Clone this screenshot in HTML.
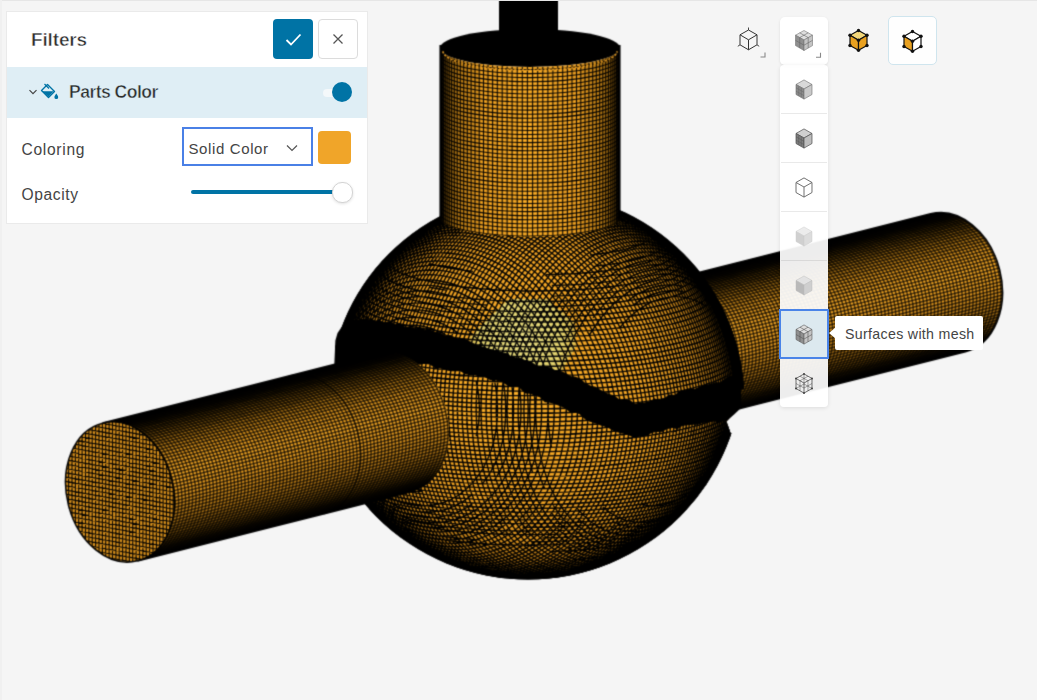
<!DOCTYPE html>
<html><head><meta charset="utf-8"><title>Filters</title>
<style>
html,body{margin:0;padding:0}
body{width:1037px;height:700px;overflow:hidden;position:relative;background:#f5f5f5;font-family:"Liberation Sans",sans-serif;color:#333}
.abs{position:absolute}
#topline{left:0;top:0;width:1037px;height:1px;background:#e6e6e6}
#leftline{left:0;top:0;width:2px;height:700px;background:#f0f0f0}
#panel{left:7px;top:12px;width:360px;height:211px;background:#fff;box-shadow:0 0 0 1px #eaeaea}
#ttl{left:24px;top:17px;font-size:19px;font-weight:bold;color:#2f2f2f;-webkit-text-stroke:.45px #fff;letter-spacing:-.15px;line-height:22px}
#ok{left:266px;top:7px;width:40px;height:40px;border-radius:4px;background:#0073a5}
#cancel{left:311px;top:7px;width:38px;height:38px;border-radius:4px;background:#fff;border:1px solid #dcdcdc}
#band{left:0;top:55px;width:360px;height:51px;background:#dfeef5}
#pc{left:62px;top:68.5px;font-size:17.6px;font-weight:bold;color:#2f2f2f;-webkit-text-stroke:.45px #dfeef5;line-height:22px;letter-spacing:-.55px}
#tog{left:316px;top:77px;width:22px;height:8px;border-radius:4px;background:#f4f8fa}
#knob{left:325px;top:70px;width:20px;height:20px;border-radius:10px;background:#0073a5}
.lbl{font-size:15.6px;color:#444;line-height:18px;letter-spacing:.7px}
#sel{left:175px;top:115px;width:127px;height:35px;border:2.5px solid #4a80e6;background:#fff;box-sizing:content-box}
#selt{left:4.5px;top:10.5px;font-size:15px;color:#444;line-height:18px;letter-spacing:.62px}
#sw{left:311px;top:119px;width:33px;height:33px;border-radius:4px;background:#f0a529}
#trk{left:184px;top:178px;width:150px;height:4px;border-radius:2px;background:#0073a5}
#thumb{left:325px;top:170px;width:19px;height:19px;border-radius:10px;background:#fff;border:1px solid #d4d4d4;box-shadow:0 1px 3px rgba(0,0,0,.12);box-sizing:content-box}
.tb{width:48px;height:48px;border-radius:5px}
#b2{left:780px;top:17px;background:rgba(255,255,255,.93);box-shadow:0 1px 3px rgba(0,0,0,.10)}
#b4{left:888px;top:16px;width:47px;height:47px;background:rgba(255,255,255,.9);border:1px solid #cfe5ee}
#dd{left:780px;top:65px;width:48px;height:342px;border-radius:4px;background:rgba(255,255,255,.93);box-shadow:0 1px 4px rgba(0,0,0,.10)}
.sep{left:1px;width:46px;height:1px;background:rgba(0,0,0,.085)}
#selit{left:-1px;top:244px;width:46px;height:46px;border:2px solid #4a84e8;background:#dce9ef}
#tip{left:835px;top:316px;width:148px;height:34px;background:#fff;border-radius:2px}
#tipa{left:829px;top:327px;width:0;height:0;border-top:6.5px solid transparent;border-bottom:6.5px solid transparent;border-right:7px solid #fff}
#tipt{left:10px;top:8.5px;font-size:14.2px;color:#444;line-height:18px;white-space:nowrap;letter-spacing:.32px}
</style></head><body>
<svg width="1037" height="700" viewBox="0 0 1037 700" style="position:absolute;left:0;top:0"><defs><filter id="soft" filterUnits="userSpaceOnUse" x="0" y="0" width="1037" height="700" color-interpolation-filters="sRGB"><feConvolveMatrix order="3" kernelMatrix="0.0324 0.1152 0.0324 0.1152 0.4096 0.1152 0.0324 0.1152 0.0324" edgeMode="none" preserveAlpha="false"/></filter>
<clipPath id="cU"><circle cx="536.3" cy="400.6" r="208"/></clipPath>
<clipPath id="cL"><circle cx="528.1" cy="365" r="214.5"/></clipPath>
<clipPath id="cA"><path d="M0,0L1037,0L1037,389L740.5,389L690,407.5L635,420L615,414.2L565,390.5L520,374.2L470,357.8L420,346L370,339L336,348L0,348Z"/></clipPath>
<clipPath id="cB"><path d="M336,348L370,339L420,346L470,357.8L520,374.2L565,390.5L615,414.2L635,420L690,407.5L740.5,389L741,406L726.5,421.5L730.5,433L1037,433L1037,700L336,700Z"/></clipPath>
<radialGradient id="gU" gradientUnits="userSpaceOnUse" cx="536.3" cy="400.6" r="208" fx="496.3" fy="335.6">
<stop offset="0" stop-color="#f8ac28"/><stop offset=".6" stop-color="#f0a222"/><stop offset=".8" stop-color="#d8901c"/><stop offset=".9" stop-color="#ac7012"/><stop offset=".96" stop-color="#5a3a06"/><stop offset="1" stop-color="#000"/></radialGradient>
<radialGradient id="gL" gradientUnits="userSpaceOnUse" cx="528.1" cy="365" r="214.5" fx="518.1" fy="395">
<stop offset="0" stop-color="#f8ac28"/><stop offset=".6" stop-color="#f0a222"/><stop offset=".8" stop-color="#d8901c"/><stop offset=".9" stop-color="#ac7012"/><stop offset=".96" stop-color="#5a3a06"/><stop offset="1" stop-color="#000"/></radialGradient>
<radialGradient id="gY" gradientUnits="userSpaceOnUse" cx="522" cy="338" r="62">
<stop offset="0" stop-color="#e8de84"/><stop offset=".65" stop-color="#e0d06c"/><stop offset=".88" stop-color="#e0c050" stop-opacity=".8"/><stop offset="1" stop-color="#e8b040" stop-opacity=".15"/></radialGradient>
<linearGradient id="gP" gradientUnits="userSpaceOnUse" x1="282.6" y1="377.7" x2="317.4" y2="515.3"><stop offset="0" stop-color="#000000"/><stop offset="0.06" stop-color="#1c1202"/><stop offset="0.13" stop-color="#5e3e07"/><stop offset="0.22" stop-color="#a87012"/><stop offset="0.34" stop-color="#e2981e"/><stop offset="0.46" stop-color="#f3a624"/><stop offset="0.62" stop-color="#e0961e"/><stop offset="0.78" stop-color="#b07414"/><stop offset="0.9" stop-color="#6a4508"/><stop offset="0.96" stop-color="#2a1a02"/><stop offset="1" stop-color="#000000"/></linearGradient>
<linearGradient id="gC" gradientUnits="userSpaceOnUse" x1="440" y1="0" x2="620" y2="0"><stop offset="0" stop-color="#1a1001"/><stop offset="0.03" stop-color="#6a4508"/><stop offset="0.1" stop-color="#b87a14"/><stop offset="0.25" stop-color="#e89c20"/><stop offset="0.5" stop-color="#f5a824"/><stop offset="0.75" stop-color="#e89c20"/><stop offset="0.9" stop-color="#b87a14"/><stop offset="0.97" stop-color="#6a4508"/><stop offset="1" stop-color="#1a1001"/></linearGradient>
<clipPath id="cRP"><path d="M602.6,296.8L930.6,213.9A53.2 71 -14.2 0 1 999.6,269.7A53.2 71 -14.2 0 1 965.4,351.6L637.4,434.5Z"/></clipPath>
<clipPath id="cC"><path d="M440,48L440,217.4A90 19 0 0 0 530,236.4A90 19 0 0 0 620,217.4L620,48A90 19 0 0 1 530,67A90 19 0 0 1 440,48Z"/></clipPath>
<clipPath id="cLP"><path d="M102.6,423.2L377.2,353.8A53.2 71 -14.2 0 1 446.2,409.6A53.2 71 -14.2 0 1 412,491.4L137.4,560.8Z"/></clipPath>
<clipPath id="cCap"><ellipse rx="53.2" ry="71" transform="translate(120 492) rotate(-14.2)"/></clipPath>
<linearGradient id="gCap" gradientUnits="userSpaceOnUse" x1="102.6" y1="423.2" x2="137.4" y2="560.8"><stop offset="0" stop-color="#d8901c"/><stop offset="0.5" stop-color="#eda022"/><stop offset="1" stop-color="#d08a1a"/></linearGradient></defs><g filter="url(#soft)"><path d="M602.6,296.8L930.6,213.9A53.2 71 -14.2 0 1 999.6,269.7A53.2 71 -14.2 0 1 965.4,351.6L637.4,434.5Z" fill="url(#gP)"/>
<g clip-path="url(#cRP)" fill="none" stroke="#000" stroke-opacity=".68">
<path d="M602.6,296.8L930.6,213.9M605.1,296.2L933.1,213.3M607.7,295.9L935.7,213M610.2,295.6L938.2,212.7M612.8,295.6L940.8,212.7M615.5,295.7L943.5,212.8M618.1,295.9L946.1,213M620.7,296.4L948.7,213.5M623.4,297L951.4,214.1M626,297.7L954,214.8M628.6,298.6L956.6,215.7M631.2,299.7L959.2,216.8M633.7,300.9L961.7,218M636.3,302.3L964.3,219.4M638.8,303.8L966.8,220.9M641.2,305.5L969.2,222.6M643.6,307.3L971.6,224.4M645.9,309.2L973.9,226.3M648.2,311.3L976.2,228.4M650.4,313.5L978.4,230.6M652.6,315.8L980.6,232.9M654.7,318.2L982.7,235.3M656.7,320.8L984.7,237.9M658.6,323.4L986.6,240.5M660.4,326.2L988.4,243.3M662.1,329L990.1,246.1M663.7,332L991.7,249.1M665.2,335L993.2,252.1M666.6,338L994.6,255.1M667.9,341.2L995.9,258.3M669.1,344.4L997.1,261.5M670.2,347.6L998.2,264.7M671.2,350.9L999.2,268M672,354.3L1000,271.4M672.7,357.6L1000.7,274.7M673.3,361L1001.3,278.1M673.8,364.4L1001.8,281.5M674.2,367.7L1002.2,284.8M674.4,371.1L1002.4,288.2M674.5,374.5L1002.5,291.6M674.4,377.8L1002.4,294.9M674.3,381.2L1002.3,298.3M674,384.4L1002,301.5M673.6,387.7L1001.6,304.8M673,390.9L1001,308M672.4,394L1000.4,311.1M671.6,397.1L999.6,314.2M670.7,400L998.7,317.1M669.6,403L997.6,320.1M668.5,405.8L996.5,322.9M667.2,408.5L995.2,325.6M665.9,411.1L993.9,328.2M664.4,413.7L992.4,330.8M662.8,416.1L990.8,333.2M661.2,418.3L989.2,335.5M659.4,420.5L987.4,337.6M657.5,422.6L985.5,339.7M655.6,424.5L983.6,341.6M653.5,426.2L981.5,343.3M651.4,427.9L979.4,345M649.2,429.3L977.2,346.4M647,430.7L975,347.8M644.7,431.9L972.7,349M642.3,432.9L970.3,350M639.9,433.8L967.9,350.9M637.4,434.5L965.4,351.6" stroke-width="1.5"/>
<path d="M603.6,296.5A53.2 71 -14.2 0 1 672.6,352.3A53.2 71 -14.2 0 1 638.4,434.2M607.1,295.7A53.2 71 -14.2 0 1 676.1,351.5A53.2 71 -14.2 0 1 641.9,433.3M610.6,294.8A53.2 71 -14.2 0 1 679.6,350.6A53.2 71 -14.2 0 1 645.4,432.5M614.1,293.9A53.2 71 -14.2 0 1 683.1,349.7A53.2 71 -14.2 0 1 648.9,431.6M617.6,293A53.2 71 -14.2 0 1 686.6,348.8A53.2 71 -14.2 0 1 652.4,430.7M621.1,292.1A53.2 71 -14.2 0 1 690.1,347.9A53.2 71 -14.2 0 1 655.9,429.8M624.6,291.2A53.2 71 -14.2 0 1 693.6,347A53.2 71 -14.2 0 1 659.4,428.9M628.1,290.4A53.2 71 -14.2 0 1 697.1,346.1A53.2 71 -14.2 0 1 662.9,428M631.6,289.5A53.2 71 -14.2 0 1 700.6,345.3A53.2 71 -14.2 0 1 666.4,427.1M635.1,288.6A53.2 71 -14.2 0 1 704.1,344.4A53.2 71 -14.2 0 1 669.9,426.3M638.6,287.7A53.2 71 -14.2 0 1 707.6,343.5A53.2 71 -14.2 0 1 673.4,425.4M642.1,286.8A53.2 71 -14.2 0 1 711.1,342.6A53.2 71 -14.2 0 1 676.9,424.5M645.6,285.9A53.2 71 -14.2 0 1 714.6,341.7A53.2 71 -14.2 0 1 680.4,423.6M649.1,285A53.2 71 -14.2 0 1 718.1,340.8A53.2 71 -14.2 0 1 683.9,422.7M652.6,284.2A53.2 71 -14.2 0 1 721.6,340A53.2 71 -14.2 0 1 687.4,421.8M656.1,283.3A53.2 71 -14.2 0 1 725.1,339.1A53.2 71 -14.2 0 1 690.9,421M659.6,282.4A53.2 71 -14.2 0 1 728.6,338.2A53.2 71 -14.2 0 1 694.4,420.1M663.1,281.5A53.2 71 -14.2 0 1 732.1,337.3A53.2 71 -14.2 0 1 697.9,419.2M666.6,280.6A53.2 71 -14.2 0 1 735.6,336.4A53.2 71 -14.2 0 1 701.4,418.3M670.1,279.7A53.2 71 -14.2 0 1 739.1,335.5A53.2 71 -14.2 0 1 704.9,417.4M673.6,278.9A53.2 71 -14.2 0 1 742.6,334.6A53.2 71 -14.2 0 1 708.4,416.5M677.1,278A53.2 71 -14.2 0 1 746.1,333.8A53.2 71 -14.2 0 1 711.9,415.6M680.6,277.1A53.2 71 -14.2 0 1 749.6,332.9A53.2 71 -14.2 0 1 715.4,414.8M684.1,276.2A53.2 71 -14.2 0 1 753.1,332A53.2 71 -14.2 0 1 718.9,413.9M687.6,275.3A53.2 71 -14.2 0 1 756.6,331.1A53.2 71 -14.2 0 1 722.4,413M691.1,274.4A53.2 71 -14.2 0 1 760.1,330.2A53.2 71 -14.2 0 1 725.9,412.1M694.6,273.5A53.2 71 -14.2 0 1 763.6,329.3A53.2 71 -14.2 0 1 729.4,411.2M698.1,272.7A53.2 71 -14.2 0 1 767.1,328.5A53.2 71 -14.2 0 1 732.9,410.3M701.6,271.8A53.2 71 -14.2 0 1 770.6,327.6A53.2 71 -14.2 0 1 736.4,409.5M705.1,270.9A53.2 71 -14.2 0 1 774.1,326.7A53.2 71 -14.2 0 1 739.9,408.6M708.6,270A53.2 71 -14.2 0 1 777.6,325.8A53.2 71 -14.2 0 1 743.4,407.7M712.1,269.1A53.2 71 -14.2 0 1 781.1,324.9A53.2 71 -14.2 0 1 746.9,406.8M715.6,268.2A53.2 71 -14.2 0 1 784.6,324A53.2 71 -14.2 0 1 750.4,405.9M719.1,267.4A53.2 71 -14.2 0 1 788.1,323.1A53.2 71 -14.2 0 1 753.9,405M722.6,266.5A53.2 71 -14.2 0 1 791.6,322.3A53.2 71 -14.2 0 1 757.4,404.1M726.1,265.6A53.2 71 -14.2 0 1 795.1,321.4A53.2 71 -14.2 0 1 760.9,403.3M729.6,264.7A53.2 71 -14.2 0 1 798.6,320.5A53.2 71 -14.2 0 1 764.4,402.4M733.1,263.8A53.2 71 -14.2 0 1 802.1,319.6A53.2 71 -14.2 0 1 767.9,401.5M736.6,262.9A53.2 71 -14.2 0 1 805.6,318.7A53.2 71 -14.2 0 1 771.4,400.6M740.1,262A53.2 71 -14.2 0 1 809.1,317.8A53.2 71 -14.2 0 1 774.9,399.7M743.6,261.2A53.2 71 -14.2 0 1 812.6,317A53.2 71 -14.2 0 1 778.4,398.8M747.1,260.3A53.2 71 -14.2 0 1 816.1,316.1A53.2 71 -14.2 0 1 781.9,398M750.6,259.4A53.2 71 -14.2 0 1 819.6,315.2A53.2 71 -14.2 0 1 785.4,397.1M754.1,258.5A53.2 71 -14.2 0 1 823.1,314.3A53.2 71 -14.2 0 1 788.9,396.2M757.6,257.6A53.2 71 -14.2 0 1 826.6,313.4A53.2 71 -14.2 0 1 792.4,395.3M761.1,256.7A53.2 71 -14.2 0 1 830.1,312.5A53.2 71 -14.2 0 1 795.9,394.4M764.6,255.9A53.2 71 -14.2 0 1 833.6,311.6A53.2 71 -14.2 0 1 799.4,393.5M768.1,255A53.2 71 -14.2 0 1 837.1,310.8A53.2 71 -14.2 0 1 802.9,392.6M771.6,254.1A53.2 71 -14.2 0 1 840.6,309.9A53.2 71 -14.2 0 1 806.4,391.8M775.1,253.2A53.2 71 -14.2 0 1 844.1,309A53.2 71 -14.2 0 1 809.9,390.9M778.6,252.3A53.2 71 -14.2 0 1 847.6,308.1A53.2 71 -14.2 0 1 813.4,390M782.1,251.4A53.2 71 -14.2 0 1 851.1,307.2A53.2 71 -14.2 0 1 816.9,389.1M785.6,250.5A53.2 71 -14.2 0 1 854.6,306.3A53.2 71 -14.2 0 1 820.4,388.2M789.1,249.7A53.2 71 -14.2 0 1 858.1,305.5A53.2 71 -14.2 0 1 823.9,387.3M792.6,248.8A53.2 71 -14.2 0 1 861.6,304.6A53.2 71 -14.2 0 1 827.4,386.5M796.1,247.9A53.2 71 -14.2 0 1 865.1,303.7A53.2 71 -14.2 0 1 830.9,385.6M799.6,247A53.2 71 -14.2 0 1 868.6,302.8A53.2 71 -14.2 0 1 834.4,384.7M803.1,246.1A53.2 71 -14.2 0 1 872.1,301.9A53.2 71 -14.2 0 1 837.9,383.8M806.6,245.2A53.2 71 -14.2 0 1 875.6,301A53.2 71 -14.2 0 1 841.4,382.9M810.1,244.4A53.2 71 -14.2 0 1 879.1,300.1A53.2 71 -14.2 0 1 844.9,382M813.6,243.5A53.2 71 -14.2 0 1 882.6,299.3A53.2 71 -14.2 0 1 848.4,381.1M817.1,242.6A53.2 71 -14.2 0 1 886.1,298.4A53.2 71 -14.2 0 1 851.9,380.3M820.6,241.7A53.2 71 -14.2 0 1 889.6,297.5A53.2 71 -14.2 0 1 855.4,379.4M824.1,240.8A53.2 71 -14.2 0 1 893.1,296.6A53.2 71 -14.2 0 1 858.9,378.5M827.6,239.9A53.2 71 -14.2 0 1 896.6,295.7A53.2 71 -14.2 0 1 862.4,377.6M831.1,239A53.2 71 -14.2 0 1 900.1,294.8A53.2 71 -14.2 0 1 865.9,376.7M834.6,238.2A53.2 71 -14.2 0 1 903.6,294A53.2 71 -14.2 0 1 869.4,375.8M838.1,237.3A53.2 71 -14.2 0 1 907.1,293.1A53.2 71 -14.2 0 1 872.9,375M841.6,236.4A53.2 71 -14.2 0 1 910.6,292.2A53.2 71 -14.2 0 1 876.4,374.1M845.1,235.5A53.2 71 -14.2 0 1 914.1,291.3A53.2 71 -14.2 0 1 879.9,373.2M848.6,234.6A53.2 71 -14.2 0 1 917.6,290.4A53.2 71 -14.2 0 1 883.4,372.3M852.1,233.7A53.2 71 -14.2 0 1 921.1,289.5A53.2 71 -14.2 0 1 886.9,371.4M855.6,232.9A53.2 71 -14.2 0 1 924.6,288.6A53.2 71 -14.2 0 1 890.4,370.5M859.1,232A53.2 71 -14.2 0 1 928.1,287.8A53.2 71 -14.2 0 1 893.9,369.6M862.6,231.1A53.2 71 -14.2 0 1 931.6,286.9A53.2 71 -14.2 0 1 897.4,368.8M866.1,230.2A53.2 71 -14.2 0 1 935.1,286A53.2 71 -14.2 0 1 900.9,367.9M869.6,229.3A53.2 71 -14.2 0 1 938.6,285.1A53.2 71 -14.2 0 1 904.4,367M873.1,228.4A53.2 71 -14.2 0 1 942.1,284.2A53.2 71 -14.2 0 1 907.9,366.1M876.6,227.6A53.2 71 -14.2 0 1 945.6,283.3A53.2 71 -14.2 0 1 911.4,365.2M880.1,226.7A53.2 71 -14.2 0 1 949.1,282.5A53.2 71 -14.2 0 1 914.9,364.3M883.6,225.8A53.2 71 -14.2 0 1 952.6,281.6A53.2 71 -14.2 0 1 918.4,363.5M887.1,224.9A53.2 71 -14.2 0 1 956.1,280.7A53.2 71 -14.2 0 1 921.9,362.6M890.6,224A53.2 71 -14.2 0 1 959.6,279.8A53.2 71 -14.2 0 1 925.4,361.7M894.1,223.1A53.2 71 -14.2 0 1 963.1,278.9A53.2 71 -14.2 0 1 928.9,360.8M897.6,222.2A53.2 71 -14.2 0 1 966.6,278A53.2 71 -14.2 0 1 932.4,359.9M901.1,221.4A53.2 71 -14.2 0 1 970.1,277.1A53.2 71 -14.2 0 1 935.9,359M904.6,220.5A53.2 71 -14.2 0 1 973.6,276.3A53.2 71 -14.2 0 1 939.4,358.1M908.1,219.6A53.2 71 -14.2 0 1 977.1,275.4A53.2 71 -14.2 0 1 942.9,357.3M911.6,218.7A53.2 71 -14.2 0 1 980.6,274.5A53.2 71 -14.2 0 1 946.4,356.4M915.1,217.8A53.2 71 -14.2 0 1 984.1,273.6A53.2 71 -14.2 0 1 949.9,355.5M918.6,216.9A53.2 71 -14.2 0 1 987.6,272.7A53.2 71 -14.2 0 1 953.4,354.6M922.1,216.1A53.2 71 -14.2 0 1 991.1,271.8A53.2 71 -14.2 0 1 956.9,353.7M925.6,215.2A53.2 71 -14.2 0 1 994.6,271A53.2 71 -14.2 0 1 960.4,352.8M929.1,214.3A53.2 71 -14.2 0 1 998.1,270.1A53.2 71 -14.2 0 1 963.9,352" stroke-width="1.5"/>
</g>
<path d="M602.6,296.8L930.6,213.9A53.2 71 -14.2 0 1 999.6,269.7A53.2 71 -14.2 0 1 965.4,351.6L637.4,434.5Z" fill="none" stroke="#000" stroke-width="1.6"/>
<g clip-path="url(#cA)"><g clip-path="url(#cU)">
<circle cx="536.3" cy="400.6" r="208" fill="url(#gU)"/>
<path d="M510,302L546,302L572,324L573,346L558,372L470,372L473,338Z" fill="url(#gY)" stroke="url(#gY)" stroke-width="6" stroke-linejoin="round"/>
<path d="M371.3,347.6A73.4 97.9 -14.2 0 1 465.9,364.3M476.2,379A73.4 97.9 -14.2 0 1 476.2,502.1M465.9,513.1A73.4 97.9 -14.2 0 1 371.3,496.4M361,481.7A73.4 97.9 -14.2 0 1 361,358.6M382.1,332.1A79.4 105.9 -14.2 0 1 460.9,346M491.1,388.6A79.4 105.9 -14.2 0 1 491.1,495.3M460.9,527.1A79.4 105.9 -14.2 0 1 382.1,513.2M351.8,470.6A79.4 105.9 -14.2 0 1 351.8,364M389,321.6A84.9 113.2 -14.2 0 1 459.7,334.1M501.7,392.3A84.9 113.2 -14.2 0 1 501.7,492.8M459.7,536.2A84.9 113.2 -14.2 0 1 389,523.7M347,465.4A84.9 113.2 -14.2 0 1 347,365M335.3,411.9A89.9 119.8 -14.2 0 1 427.3,311A89.9 119.8 -14.2 0 1 519.2,444.4A89.9 119.8 -14.2 0 1 427.3,545.3A89.9 119.8 -14.2 0 1 335.3,411.9M333.5,410.4A94.5 126 -14.2 0 1 430.1,304.3A94.5 126 -14.2 0 1 526.8,444.5A94.5 126 -14.2 0 1 430.1,550.6A94.5 126 -14.2 0 1 333.5,410.4M364.1,320.4A98.7 131.7 -14.2 0 1 501.9,344.7M505.7,350.1A98.7 131.7 -14.2 0 1 505.7,529M501.9,533A98.7 131.7 -14.2 0 1 364.1,508.7M360.4,503.3A98.7 131.7 -14.2 0 1 360.4,324.4M330.8,407.4A102.7 137 -14.2 0 1 435.9,292.1A102.7 137 -14.2 0 1 541,444.5A102.7 137 -14.2 0 1 435.9,559.9A102.7 137 -14.2 0 1 330.8,407.4M329.9,406A106.5 142 -14.2 0 1 438.8,286.5A106.5 142 -14.2 0 1 547.7,444.5A106.5 142 -14.2 0 1 438.8,564A106.5 142 -14.2 0 1 329.9,406M329.2,404.6A110 146.7 -14.2 0 1 441.7,281.2A110 146.7 -14.2 0 1 554.2,444.4A110 146.7 -14.2 0 1 441.7,567.9A110 146.7 -14.2 0 1 329.2,404.6M328.7,403.3A113.3 151 -14.2 0 1 444.6,276.1A113.3 151 -14.2 0 1 560.5,444.3A113.3 151 -14.2 0 1 444.6,571.4A113.3 151 -14.2 0 1 328.7,403.3M328.4,402A116.4 155.2 -14.2 0 1 447.5,271.4A116.4 155.2 -14.2 0 1 566.5,444.1A116.4 155.2 -14.2 0 1 447.5,574.7A116.4 155.2 -14.2 0 1 328.4,402M328.3,403.5A119.3 159.1 -14.2 0 1 429.7,265.4A119.3 159.1 -14.2 0 1 566.1,393.4A119.3 159.1 -14.2 0 1 506.2,570.4A119.3 159.1 -14.2 0 1 351.6,496.3M329.3,380.3A122.1 162.8 -14.2 0 1 440.2,261.1A122.1 162.8 -14.2 0 1 571.3,390.7A122.1 162.8 -14.2 0 1 519.4,568.2A122.1 162.8 -14.2 0 1 364.9,518.5M331.8,362.4A124.7 166.2 -14.2 0 1 503.2,278.2A124.7 166.2 -14.2 0 1 566.2,522.4A124.7 166.2 -14.2 0 1 375.9,533M335.3,347.1A127.1 169.5 -14.2 0 1 511.2,277.6A127.1 169.5 -14.2 0 1 572.4,521.4A127.1 169.5 -14.2 0 1 384.4,542.7M339.1,334.5A129.5 172.6 -14.2 0 1 517.2,275.8A129.5 172.6 -14.2 0 1 579.6,517.7A129.5 172.6 -14.2 0 1 395.7,553.8M343.7,322A131.7 175.6 -14.2 0 1 524.5,275.4A131.7 175.6 -14.2 0 1 585.2,517A131.7 175.6 -14.2 0 1 403.6,560.8M348,312.3A133.7 178.4 -14.2 0 1 530.5,274.2A133.7 178.4 -14.2 0 1 591,515.3A133.7 178.4 -14.2 0 1 412,567.4M352.8,302.7A135.7 181 -14.2 0 1 536.4,273.2A135.7 181 -14.2 0 1 596.7,513.3A135.7 181 -14.2 0 1 420.8,573.6M358.1,293.3A137.6 183.5 -14.2 0 1 542.4,272.3A137.6 183.5 -14.2 0 1 602.3,511.2A137.6 183.5 -14.2 0 1 429.9,579.3M362.5,286.4A139.3 185.8 -14.2 0 1 547.6,271.1A139.3 185.8 -14.2 0 1 607.5,509.9A139.3 185.8 -14.2 0 1 437,583.4M367.1,279.6A141 188 -14.2 0 1 552,269.3A141 188 -14.2 0 1 613.2,506.6A141 188 -14.2 0 1 446.8,588.3M373.7,270.8A142.5 190.1 -14.2 0 1 558.6,269.7A142.5 190.1 -14.2 0 1 617.9,505.9A142.5 190.1 -14.2 0 1 454.3,591.7M379,264.5A144 192 -14.2 0 1 563.8,268.9A144 192 -14.2 0 1 622.8,504.2A144 192 -14.2 0 1 461.9,594.9M384.6,258.3A145.3 193.8 -14.2 0 1 568.9,268.3A145.3 193.8 -14.2 0 1 627.6,502.3A145.3 193.8 -14.2 0 1 469.8,597.7M390.4,252.4A146.6 195.5 -14.2 0 1 573.9,267.8A146.6 195.5 -14.2 0 1 632.3,500.4A146.6 195.5 -14.2 0 1 477.7,600.2M394.5,248.5A147.8 197.1 -14.2 0 1 577.5,265.9A147.8 197.1 -14.2 0 1 637.2,497.3A147.8 197.1 -14.2 0 1 485.7,602.4M400.7,242.9A148.9 198.5 -14.2 0 1 583.2,266.3A148.9 198.5 -14.2 0 1 641.1,497.2A148.9 198.5 -14.2 0 1 491.2,603.7M407.1,237.6A149.9 199.9 -14.2 0 1 588.1,266.2A149.9 199.9 -14.2 0 1 645.5,495A149.9 199.9 -14.2 0 1 499.4,605.3M411.6,234.1A150.8 201.1 -14.2 0 1 591.5,264.6A150.8 201.1 -14.2 0 1 650.1,491.7A150.8 201.1 -14.2 0 1 507.7,606.6M418.4,229.2A151.7 202.3 -14.2 0 1 597.1,265.4A151.7 202.3 -14.2 0 1 653.8,491.4A151.7 202.3 -14.2 0 1 513.3,607.3M425.4,224.6A152.4 203.3 -14.2 0 1 601.9,265.6A152.4 203.3 -14.2 0 1 658,489A152.4 203.3 -14.2 0 1 521.7,608.1M430.3,221.7A153.1 204.2 -14.2 0 1 606,265.1A153.1 204.2 -14.2 0 1 661.8,487.6A153.1 204.2 -14.2 0 1 527.3,608.4M437.6,217.5A153.7 205 -14.2 0 1 610.7,265.5A153.7 205 -14.2 0 1 665.8,485A153.7 205 -14.2 0 1 535.7,608.6M442.6,214.9A154.3 205.8 -14.2 0 1 666.4,368.2A154.3 205.8 -14.2 0 1 541.4,608.5M450.2,211.3A154.7 206.4 -14.2 0 1 669.8,367.3A154.7 206.4 -14.2 0 1 549.8,608.2M455.4,209A155.1 206.9 -14.2 0 1 673,366.5A155.1 206.9 -14.2 0 1 555.5,607.7M463.3,205.9A155.4 207.3 -14.2 0 1 676.2,365.7A155.4 207.3 -14.2 0 1 563.9,606.8M468.6,203.9A155.7 207.6 -14.2 0 1 679.3,364.9A155.7 207.6 -14.2 0 1 569.5,605.9M474,202.1A155.9 207.8 -14.2 0 1 681.9,362.4A155.9 207.8 -14.2 0 1 577.8,604.4M482.1,199.8A155.9 208 -14.2 0 1 685.4,363.4A155.9 208 -14.2 0 1 583.4,603.2M487.6,198.4A156 208 -14.2 0 1 688.3,362.7A156 208 -14.2 0 1 588.9,601.8M495.9,196.6A155.9 207.9 -14.2 0 1 691.1,362A155.9 207.9 -14.2 0 1 597,599.5M501.5,195.5A155.8 207.8 -14.2 0 1 693.9,361.3A155.8 207.8 -14.2 0 1 602.4,597.8M507.1,194.7A155.6 207.5 -14.2 0 1 696.1,358.8A155.6 207.5 -14.2 0 1 610.3,595M515.4,193.7A155.3 207.1 -14.2 0 1 699.2,359.9A155.3 207.1 -14.2 0 1 615.6,592.9M521.1,193.2A155 206.7 -14.2 0 1 701.3,357.5A155 206.7 -14.2 0 1 623.4,589.5M529.5,192.7A154.5 206.1 -14.2 0 1 704.2,358.6A154.5 206.1 -14.2 0 1 628.5,587M535.2,192.6A154.1 205.4 -14.2 0 1 706.6,358A154.1 205.4 -14.2 0 1 633.6,584.5M543.6,192.7A153.5 204.7 -14.2 0 1 708.9,357.4A153.5 204.7 -14.2 0 1 640.9,580.4M549.3,193A152.8 203.8 -14.2 0 1 711.2,356.9A152.8 203.8 -14.2 0 1 645.8,577.5M557.7,193.7A152.1 202.8 -14.2 0 1 713.4,356.3A152.1 202.8 -14.2 0 1 652.8,572.9M563.3,194.4A151.3 201.8 -14.2 0 1 715.1,354.1A151.3 201.8 -14.2 0 1 659.7,568M571.6,195.6A150.4 200.6 -14.2 0 1 717.5,355.3A150.4 200.6 -14.2 0 1 664.2,564.6M579.8,197.2A149.4 199.3 -14.2 0 1 719.5,354.8A149.4 199.3 -14.2 0 1 670.7,559.3M585.3,198.5A148.4 197.9 -14.2 0 1 720.9,352.6A148.4 197.9 -14.2 0 1 677,553.8M593.4,200.6A147.3 196.4 -14.2 0 1 723.1,353.8A147.3 196.4 -14.2 0 1 681.1,550M601.3,203A146 194.8 -14.2 0 1 724.8,353.4A146 194.8 -14.2 0 1 686.9,544M609.2,205.8A144.7 193 -14.2 0 1 726.4,353A144.7 193 -14.2 0 1 692.5,537.9M616.9,208.8A143.3 191.2 -14.2 0 1 728,352.6A143.3 191.2 -14.2 0 1 697.9,531.6M624.4,212.2A141.8 189.2 -14.2 0 1 729.4,352.2A141.8 189.2 -14.2 0 1 703,525.1M631.8,215.8A140.2 187 -14.2 0 1 730.3,350.3A140.2 187 -14.2 0 1 709.3,516.1M641.4,221.1A138.6 184.8 -14.2 0 1 732,351.6A138.6 184.8 -14.2 0 1 713.7,509.2M648.3,225.3A136.8 182.4 -14.2 0 1 732.7,349.7A136.8 182.4 -14.2 0 1 719.1,499.8M657.2,231.4A134.9 179.8 -14.2 0 1 722.8,492.7M665.8,237.8A132.8 177.2 -14.2 0 1 727.3,482.9M673.9,244.6A130.7 174.3 -14.2 0 1 732.2,470.5M683.6,253.7A128.4 171.3 -14.2 0 1 735.5,460.5M694.3,265.3A126 168.1 -14.2 0 1 739.4,445.3M704,277.5A123.5 164.7 -14.2 0 1 742.2,430M715.4,294.8A120.8 161.2 -14.2 0 1 744.1,409.3M728.1,320.1A118 157.4 -14.2 0 1 743.4,381M705.8,517.5A79.8 127.3 -170 0 1 619.2,539.3M619.2,328.3A79.8 127.3 -170 0 1 705.8,306.4M685.4,539.2A83.3 132.9 -170 0 1 632.7,552.5M632.7,305.4A83.3 132.9 -170 0 1 685.4,292.1M683,543.2A86.6 138.1 -170 0 1 628.2,557M628.2,300.2A86.6 138.1 -170 0 1 683,286.3M713.5,509.5A89.7 143 -170 0 1 589.6,539.1M589.6,334.6A89.7 143 -170 0 1 714.7,303M704.4,523.1A92.6 147.7 -170 0 1 593,551.3M593,317.8A92.6 147.7 -170 0 1 704.4,289.6M698.3,531A95.3 152 -170 0 1 561.4,516.8A95.3 152 -170 0 1 599,300.8A95.3 152 -170 0 1 732.9,332.6M690.3,540.4A97.8 156.1 -170 0 1 565.1,536.7M552.6,511A97.8 156.1 -170 0 1 552.6,372.5M565.1,340.6A97.8 156.1 -170 0 1 718.5,301.8M683.3,547.8A100.3 159.9 -170 0 1 564.5,545.9M540.2,489.1A100.3 159.9 -170 0 1 540.2,397.7M564.5,328.7A100.3 159.9 -170 0 1 712.1,291.4M675.9,554.8A102.5 163.6 -170 0 1 541.7,515A102.5 163.6 -170 0 1 579.8,295.9A102.5 163.6 -170 0 1 719.8,302.6M668.1,561.5A104.7 167 -170 0 1 535.1,513.3A104.7 167 -170 0 1 574.7,293.3A104.7 167 -170 0 1 715.8,295.6M661.7,566.5A106.7 170.2 -170 0 1 540.8,539M538.5,534.9A106.7 170.2 -170 0 1 538.5,344M540.8,338.7A106.7 170.2 -170 0 1 625.1,251.2A106.7 170.2 -170 0 1 711.6,288.7M655.2,571.3A108.7 173.3 -170 0 1 523.5,512.4A108.7 173.3 -170 0 1 563.4,290.1A108.7 173.3 -170 0 1 707.1,282M648.4,575.8A110.5 176.2 -170 0 1 517.8,511.7A110.5 176.2 -170 0 1 557.9,288.8A110.5 176.2 -170 0 1 702.4,275.4M641.5,580A112.2 179 -170 0 1 512.2,510.9A112.2 179 -170 0 1 552.3,287.6A112.2 179 -170 0 1 697.4,269M634.4,584A113.8 181.6 -170 0 1 506.7,509.9A113.8 181.6 -170 0 1 546.8,286.6A113.8 181.6 -170 0 1 692.1,262.8M629.2,586.7A115.4 184 -170 0 1 501.8,510.6A115.4 184 -170 0 1 540.8,286.5A115.4 184 -170 0 1 686.6,256.8M621.8,590.2A116.8 186.3 -170 0 1 496.2,508.4A116.8 186.3 -170 0 1 536.5,284.3A116.8 186.3 -170 0 1 682.5,252.6M616.4,592.5A118.2 188.5 -170 0 1 491.5,508.9A118.2 188.5 -170 0 1 530.5,284.6A118.2 188.5 -170 0 1 676.6,247M608.9,595.5A119.4 190.5 -170 0 1 486,506.5A119.4 190.5 -170 0 1 526.3,282.6A119.4 190.5 -170 0 1 672.2,243.1M603.4,597.5A120.6 192.4 -170 0 1 481.2,505.9A120.6 192.4 -170 0 1 521.5,281.5A120.6 192.4 -170 0 1 667.7,239.4M597.8,599.3A121.8 194.2 -170 0 1 476.6,506.2A121.8 194.2 -170 0 1 515.6,282.2A121.8 194.2 -170 0 1 661.3,234.4M590,601.5A122.8 195.9 -170 0 1 471.4,503.4A122.8 195.9 -170 0 1 511.5,280.5A122.8 195.9 -170 0 1 656.6,230.9M584.3,603A123.8 197.4 -170 0 1 466.8,502.6A123.8 197.4 -170 0 1 506.9,279.7A123.8 197.4 -170 0 1 651.8,227.6M578.6,604.2A124.7 198.9 -170 0 1 462.3,501.6A124.7 198.9 -170 0 1 502.2,279A124.7 198.9 -170 0 1 646.9,224.4M572.9,605.3A125.5 200.2 -170 0 1 458,501.6A125.5 200.2 -170 0 1 496.5,280.1A125.5 200.2 -170 0 1 639.9,220.3M567.2,606.3A126.3 201.4 -170 0 1 453.6,500.6A126.3 201.4 -170 0 1 492,279.6A126.3 201.4 -170 0 1 634.8,217.4M561.4,607.1A127 202.5 -170 0 1 449.2,499.4A127 202.5 -170 0 1 487.5,279.2A127 202.5 -170 0 1 629.7,214.7M555.6,607.7A127.6 203.5 -170 0 1 443.5,385.1A127.6 203.5 -170 0 1 624.5,212.2M547.6,608.3A128.2 204.4 -170 0 1 439.8,382.6A128.2 204.4 -170 0 1 619.2,209.8M541.8,608.5A128.7 205.2 -170 0 1 435.9,381.9A128.7 205.2 -170 0 1 613.8,207.6M536,608.6A129.1 205.9 -170 0 1 432,381.2A129.1 205.9 -170 0 1 608.4,205.5M530.2,608.5A129.5 206.5 -170 0 1 428.2,380.5A129.5 206.5 -170 0 1 602.9,203.6M524.4,608.2A129.8 207 -170 0 1 424.4,379.9A129.8 207 -170 0 1 597.4,201.8M518.7,607.8A130 207.4 -170 0 1 420.7,379.2A130 207.4 -170 0 1 591.9,200.2M512.9,607.3A130.2 207.7 -170 0 1 417.1,378.6A130.2 207.7 -170 0 1 586.3,198.7M507.2,606.5A130.3 207.9 -170 0 1 413.5,377.9A130.3 207.9 -170 0 1 580.7,197.4M501.4,605.6A130.4 208 -170 0 1 410,377.3A130.4 208 -170 0 1 575,196.2M495.8,604.6A130.4 208 -170 0 1 406.5,376.7A130.4 208 -170 0 1 569.3,195.2M490.1,603.4A130.3 207.9 -170 0 1 403.1,376.1A130.3 207.9 -170 0 1 563.6,194.4M484.5,602A130.2 207.7 -170 0 1 399.8,375.5A130.2 207.7 -170 0 1 557.8,193.7M478.9,600.5A130 207.4 -170 0 1 396.5,374.9A130 207.4 -170 0 1 552.1,193.2M473.4,598.8A129.8 207 -170 0 1 393.3,374.4A129.8 207 -170 0 1 546.3,192.8M467.9,597A129.5 206.6 -170 0 1 390.1,373.8A129.5 206.6 -170 0 1 540.5,192.6M462.4,595A129.1 206 -170 0 1 387.1,373.3A129.1 206 -170 0 1 534.7,192.6M457,592.9A128.7 205.3 -170 0 1 384,372.7A128.7 205.3 -170 0 1 528.9,192.7M451.7,590.6A128.2 204.5 -170 0 1 381.1,372.2A128.2 204.5 -170 0 1 523.1,193M446.4,588.2A127.7 203.6 -170 0 1 378.1,371.7A127.7 203.6 -170 0 1 517.3,193.5M441.2,585.6A127 202.6 -170 0 1 375,373A127 202.6 -170 0 1 509.3,194.4M436.1,582.9A126.3 201.5 -170 0 1 372.2,372.5A126.3 201.5 -170 0 1 503.6,195.2M431,580A125.6 200.3 -170 0 1 369.5,372A125.6 200.3 -170 0 1 497.8,196.2M426.1,577A124.8 199 -170 0 1 366.9,371.5A124.8 199 -170 0 1 492.1,197.4M419.3,572.5A123.9 197.6 -170 0 1 364.6,369.3A123.9 197.6 -170 0 1 486.4,198.7M414.5,569.2A122.9 196 -170 0 1 362.1,368.9A122.9 196 -170 0 1 480.8,200.1M409.8,565.7A121.9 194.4 -170 0 1 359.4,370.2A121.9 194.4 -170 0 1 473,202.5M405.2,562.1A120.8 192.6 -170 0 1 357,369.7A120.8 192.6 -170 0 1 467.5,204.3M399,556.8A119.6 190.7 -170 0 1 355,367.7A119.6 190.7 -170 0 1 462,206.3M394.7,552.9A118.3 188.7 -170 0 1 352.5,368.9A118.3 188.7 -170 0 1 454.4,209.4M388.8,547.2A117 186.5 -170 0 1 350.7,366.9A117 186.5 -170 0 1 449.1,211.8M384.7,543A115.5 184.3 -170 0 1 348.4,368.2A115.5 184.3 -170 0 1 441.7,215.3M379.3,537A114 181.8 -170 0 1 346.7,366.3A114 181.8 -170 0 1 436.6,218.1M374.1,530.7A112.4 179.3 -170 0 1 344.8,365.9A112.4 179.3 -170 0 1 429.5,222.1M370.5,526.1A110.7 176.5 -170 0 1 342.8,367.2A110.7 176.5 -170 0 1 422.6,226.4M365.7,519.6A108.9 173.6 -170 0 1 341.1,366.8A108.9 173.6 -170 0 1 415.9,231M361.2,512.8A107 170.6 -170 0 1 339.6,366.6A107 170.6 -170 0 1 409.4,235.8M355.8,504A104.9 167.4 -170 0 1 338.4,364.9A104.9 167.4 -170 0 1 403.1,240.9M342.8,475.1A102.8 164 -170 0 1 342.8,339.6M359.9,295.8A102.8 164 -170 0 1 395.3,247.7M347.4,487.7A100.5 160.3 -170 0 1 389.6,253.2M335.2,451A98.1 156.5 -170 0 1 335.2,361.6M359,294A98.1 156.5 -170 0 1 381,262.2M367.5,279.2A95.6 152.5 -170 0 1 374.5,269.9M334.4,450.7A92.9 148.1 -170 0 1 334.4,356.4M354.8,299.6A92.9 148.1 -170 0 1 367.1,279.6M329.8,425.3A87 138.7 -170 0 1 337.4,340.4M605.7,590.3A23.8 112.4 -90 0 0 635.7,582.8M570.4,585.2A27.7 131.1 -90 0 0 662.4,566M592,580.4A28.8 136.4 -90 0 0 668.1,561.5M401.9,558.9A29.9 141.4 -90 0 0 516.9,579.3M529.1,579.5A29.9 141.4 -90 0 0 673.6,556.8M431.3,566.8A30.9 146.2 -90 0 0 454.8,570.9M549.3,576A30.9 146.2 -90 0 0 678.8,552.2M562.7,572.2A31.8 150.6 -90 0 0 683.6,547.4M385,543.3A32.7 154.7 -90 0 0 536.6,569.2A32.7 154.7 -90 0 0 687.7,543.2M388.3,544.1A33.5 158.7 -90 0 0 506.3,565M533.8,565.6A33.5 158.7 -90 0 0 692.1,538.4M390.5,542.8A34.3 162.4 -90 0 0 491.8,560.7M539.4,562A34.3 162.4 -90 0 0 695.7,534.2M373,529.4A35.1 165.9 -90 0 0 536.6,558.3A35.1 165.9 -90 0 0 699.7,529.3M369.2,524.5A35.8 169.2 -90 0 0 536.6,554.6A35.8 169.2 -90 0 0 703.4,524.4M366.2,520.2A36.4 172.3 -90 0 0 536.6,550.9A36.4 172.3 -90 0 0 706.5,520.1M362.8,515.3A37 175.3 -90 0 0 535.1,547.1A37 175.3 -90 0 0 709.5,515.8M360,511A37.6 178.1 -90 0 0 536.6,543.3A37.6 178.1 -90 0 0 712.7,510.8M357,506A38.2 180.7 -90 0 0 535,539.5A38.2 180.7 -90 0 0 715.3,506.5M354.5,501.7A38.7 183.2 -90 0 0 536.6,535.6A38.7 183.2 -90 0 0 718.2,501.5M352.2,497.3A39.2 185.5 -90 0 0 536.6,531.7A39.2 185.5 -90 0 0 720.5,497.2M349.6,492.3A39.7 187.8 -90 0 0 535,527.8A39.7 187.8 -90 0 0 722.7,492.8M347.5,487.9A40.1 189.8 -90 0 0 536.6,523.8A40.1 189.8 -90 0 0 725.1,487.8M345.6,483.6A40.5 191.8 -90 0 0 536.6,519.8A40.5 191.8 -90 0 0 727.1,483.4M343.4,478.5A40.9 193.6 -90 0 0 536.6,515.8A40.9 193.6 -90 0 0 729.2,478.4M341.7,474.2A41.3 195.3 -90 0 0 536.6,511.8A41.3 195.3 -90 0 0 730.9,474M340.2,469.8A41.6 196.9 -90 0 0 536.6,507.7A41.6 196.9 -90 0 0 732.5,469.6M338.4,464.7A41.9 198.4 -90 0 0 534.9,503.6A41.9 198.4 -90 0 0 734,465.3M337.1,460.3A42.2 199.7 -90 0 0 536.6,499.5A42.2 199.7 -90 0 0 735.6,460.2M335.8,455.9A42.5 201 -90 0 0 536.7,495.4A42.5 201 -90 0 0 736.8,455.8M334.4,450.8A42.7 202.1 -90 0 0 534.9,491.2A42.7 202.1 -90 0 0 738,451.4M333.4,446.4A42.9 203.2 -90 0 0 536.7,487A42.9 203.2 -90 0 0 739.2,446.3M332.5,442A43.1 204.1 -90 0 0 536.7,482.8A43.1 204.1 -90 0 0 740.2,441.9M331.7,437.6A43.3 204.9 -90 0 0 536.7,478.6A43.3 204.9 -90 0 0 741,437.5M330.8,432.5A43.5 205.7 -90 0 0 536.7,474.4A43.5 205.7 -90 0 0 741.9,432.3M330.1,428.1A43.6 206.3 -90 0 0 536.7,470.1A43.6 206.3 -90 0 0 742.5,427.9M329.6,423.7A43.7 206.8 -90 0 0 536.7,465.8A43.7 206.8 -90 0 0 743,423.6M329.1,418.5A43.8 207.3 -90 0 0 534.9,461.5A43.8 207.3 -90 0 0 743.4,419.2M328.7,414.1A43.9 207.6 -90 0 0 536.7,457.2A43.9 207.6 -90 0 0 743.9,414M328.5,409.8A43.9 207.8 -90 0 0 536.7,452.8A43.9 207.8 -90 0 0 744.1,409.6M328.4,405.4A43.9 208 -90 0 0 536.7,448.5A43.9 208 -90 0 0 744.2,405.2M328.3,400.2A44 208 -90 0 0 534.8,444.1A44 208 -90 0 0 744.3,400.8M328.4,395.8A43.9 207.9 -90 0 0 536.7,439.7A43.9 207.9 -90 0 0 744.2,395.6M328.5,391.4A43.9 207.8 -90 0 0 536.7,435.2A43.9 207.8 -90 0 0 744.1,391.2M328.8,387A43.9 207.5 -90 0 0 536.7,430.8A43.9 207.5 -90 0 0 743.8,386.8M329.1,381.8A43.8 207.2 -90 0 0 536.7,426.3A43.8 207.2 -90 0 0 743.4,381.7M329.6,377.4A43.7 206.7 -90 0 0 536.7,421.8A43.7 206.7 -90 0 0 743,377.3M330.2,373A43.6 206.2 -90 0 0 536.7,417.3A43.6 206.2 -90 0 0 742.4,372.9M330.9,367.9A43.4 205.5 -90 0 0 534.9,412.8A43.4 205.5 -90 0 0 741.8,368.5M331.6,363.5A43.3 204.8 -90 0 0 536.7,408.2A43.3 204.8 -90 0 0 740.9,363.3M332.5,359.1A43.1 203.9 -90 0 0 536.7,403.6A43.1 203.9 -90 0 0 740.1,358.9M333.4,354.7A42.9 203 -90 0 0 536.7,399A42.9 203 -90 0 0 739.1,354.6M334.7,349.6A42.7 201.9 -90 0 0 534.9,394.4A42.7 201.9 -90 0 0 738.1,350.2M335.8,345.2A42.4 200.7 -90 0 0 536.7,389.8A42.4 200.7 -90 0 0 736.7,345M337.1,340.8A42.2 199.5 -90 0 0 536.6,385.1A42.2 199.5 -90 0 0 735.5,340.7M338.7,335.7A41.9 198.1 -90 0 0 534.9,380.4A41.9 198.1 -90 0 0 734.1,336.3M340.2,331.3A41.5 196.6 -90 0 0 536.6,375.7A41.5 196.6 -90 0 0 732.4,331.2M341.8,326.9A41.2 195 -90 0 0 536.6,370.9A41.2 195 -90 0 0 730.8,326.8M343.8,321.9A40.8 193.2 -90 0 0 535,366.2A40.8 193.2 -90 0 0 729,322.4M345.6,317.5A40.4 191.4 -90 0 0 536.6,361.4A40.4 191.4 -90 0 0 726.9,317.3M347.6,313.1A40 189.4 -90 0 0 536.6,356.6A40 189.4 -90 0 0 724.9,313M350,308.1A39.6 187.3 -90 0 0 535,351.7A39.6 187.3 -90 0 0 722.8,308.6M352.2,303.7A39.1 185 -90 0 0 536.6,346.8A39.1 185 -90 0 0 720.3,303.6M354.6,299.4A38.6 182.7 -90 0 0 536.6,341.9A38.6 182.7 -90 0 0 717.9,299.2M357.5,294.4A38.1 180.1 -90 0 0 536.6,337A38.1 180.1 -90 0 0 715.1,294.2M360.1,290A37.5 177.5 -90 0 0 536.6,332.1A37.5 177.5 -90 0 0 712.4,289.9M363.3,285.1A36.9 174.6 -90 0 0 535.1,327.1A36.9 174.6 -90 0 0 709.6,285.6M366.3,280.8A36.3 171.6 -90 0 0 536.6,322A36.3 171.6 -90 0 0 706.2,280.6M369.9,275.8A35.6 168.5 -90 0 0 535.1,317A35.6 168.5 -90 0 0 703.1,276.3M373.2,271.6A34.9 165.1 -90 0 0 536.6,311.8A34.9 165.1 -90 0 0 699.3,271.4M377.1,266.7A34.1 161.6 -90 0 0 376.8,278M393.8,288.6A34.1 161.6 -90 0 0 486.6,305M539.4,306.7A34.1 161.6 -90 0 0 695.8,267.2M380.8,262.4A33.3 157.8 -90 0 0 536.6,301.5A33.3 157.8 -90 0 0 691.7,262.3M385.2,257.6A32.5 153.8 -90 0 0 382.9,266.1M429.6,287.2A32.5 153.8 -90 0 0 446.1,290.1M552.6,296.1A32.5 153.8 -90 0 0 689.7,261.4M389.9,252.8A31.6 149.6 -90 0 0 452.1,285.5A31.6 149.6 -90 0 0 618.7,285.7A31.6 149.6 -90 0 0 683.1,253.3M394.3,248.6A30.7 145.1 -90 0 0 391.5,257.2M551.7,285.5A30.7 145.1 -90 0 0 681.1,252.8M399.5,243.9A29.7 140.4 -90 0 0 398.5,245M586.8,278.2A29.7 140.4 -90 0 0 674.1,256.2M405,239.3A28.6 135.3 -90 0 0 401.8,249.2M429.8,263.8A28.6 135.3 -90 0 0 473,271.4M546,274.7A28.6 135.3 -90 0 0 670.8,243.1M593.4,266.4A27.4 129.8 -90 0 0 661.2,249.3M589.9,255.1A24.9 117.7 -90 0 0 648.9,240.2" fill="none" stroke="#000" stroke-width="1.4"/>
<circle cx="536.3" cy="400.6" r="206.2" fill="none" stroke="#000" stroke-width="5.5"/>
<path d="M692.2,269.8A203.5 203.5 0 0 1 729.3,336A203.5 203.5 0 0 1 739.5,411.3" fill="none" stroke="#000" stroke-width="11" stroke-linecap="round" opacity=".92"/>
<path d="M333.3,372.1A205 205 0 0 1 350.5,314A205 205 0 0 1 384,263.4" fill="none" stroke="#000" stroke-width="7" stroke-linecap="round" opacity=".85"/>
</g></g>
<g clip-path="url(#cB)"><g clip-path="url(#cL)">
<circle cx="528.1" cy="365" r="214.5" fill="url(#gL)"/>
<path d="M388.6,301.1A72.5 96.6 -14.2 0 1 421.9,307M476.2,381A72.5 96.6 -14.2 0 1 476.2,436.2M421.9,491A72.5 96.6 -14.2 0 1 388.6,485.1M334.4,411.1A72.5 96.6 -14.2 0 1 334.4,355.9M324.6,379.3A84.5 112.7 -14.2 0 1 411,284.4A84.5 112.7 -14.2 0 1 497.5,409.9A84.5 112.7 -14.2 0 1 411,504.8A84.5 112.7 -14.2 0 1 324.6,379.3M356.1,292.7A89.8 119.7 -14.2 0 1 471.7,313.2M483.2,329.4A89.8 119.7 -14.2 0 1 483.2,482.9M471.7,495A89.8 119.7 -14.2 0 1 356.1,474.6M344.6,458.4A89.8 119.7 -14.2 0 1 344.6,304.9M361.3,282.3A94.6 126.1 -14.2 0 1 472.3,302M494.1,332.6A94.6 126.1 -14.2 0 1 494.1,481M472.3,503.9A94.6 126.1 -14.2 0 1 361.3,484.3M339.5,453.7A94.6 126.1 -14.2 0 1 339.5,305.3M318.4,374.5A99.1 132.1 -14.2 0 1 419.7,263.3A99.1 132.1 -14.2 0 1 521,410.3A99.1 132.1 -14.2 0 1 419.7,521.5A99.1 132.1 -14.2 0 1 318.4,374.5M317,373A103.2 137.7 -14.2 0 1 422.6,257.1A103.2 137.7 -14.2 0 1 528.2,410.3A103.2 137.7 -14.2 0 1 422.6,526.2A103.2 137.7 -14.2 0 1 317,373M315.9,371.6A107.1 142.9 -14.2 0 1 425.5,251.3A107.1 142.9 -14.2 0 1 535.1,410.3A107.1 142.9 -14.2 0 1 425.5,530.6A107.1 142.9 -14.2 0 1 315.9,371.6M315,370.2A110.8 147.7 -14.2 0 1 428.4,245.8A110.8 147.7 -14.2 0 1 541.7,410.2A110.8 147.7 -14.2 0 1 428.4,534.6A110.8 147.7 -14.2 0 1 315,370.2M314.4,368.8A114.2 152.3 -14.2 0 1 431.2,240.6A114.2 152.3 -14.2 0 1 548.1,410.1A114.2 152.3 -14.2 0 1 431.2,538.4A114.2 152.3 -14.2 0 1 314.4,368.8M313.9,367.5A117.5 156.7 -14.2 0 1 434.1,235.6A117.5 156.7 -14.2 0 1 554.3,410A117.5 156.7 -14.2 0 1 434.1,541.9A117.5 156.7 -14.2 0 1 313.9,367.5M313.7,366.2A120.5 160.8 -14.2 0 1 437,230.9A120.5 160.8 -14.2 0 1 560.3,409.8A120.5 160.8 -14.2 0 1 437,545.2A120.5 160.8 -14.2 0 1 313.7,366.2M313.6,362.2A123.4 164.6 -14.2 0 1 420.7,224.9A123.4 164.6 -14.2 0 1 559.7,357.4A123.4 164.6 -14.2 0 1 499.7,539.6A123.4 164.6 -14.2 0 1 340.4,468.8M314.9,341.1A126.2 168.3 -14.2 0 1 430.4,220.6A126.2 168.3 -14.2 0 1 564.9,354.6A126.2 168.3 -14.2 0 1 512.2,537.5A126.2 168.3 -14.2 0 1 353.1,489M317.8,322.6A128.8 171.7 -14.2 0 1 495.7,239.4A128.8 171.7 -14.2 0 1 559,491.5A128.8 171.7 -14.2 0 1 362.8,501.6M320.9,309.7A131.2 175 -14.2 0 1 501.7,237.4A131.2 175 -14.2 0 1 566.4,488A131.2 175 -14.2 0 1 373.5,513.7M324.7,296.8A133.6 178.1 -14.2 0 1 508.5,236.2A133.6 178.1 -14.2 0 1 572.8,485.8A133.6 178.1 -14.2 0 1 383.1,523.1M329.5,284A135.8 181.1 -14.2 0 1 516,235.9A135.8 181.1 -14.2 0 1 578.5,485A135.8 181.1 -14.2 0 1 391.3,530.2M333.9,274A137.9 183.8 -14.2 0 1 522,234.7A137.9 183.8 -14.2 0 1 584.3,483.2A137.9 183.8 -14.2 0 1 399.9,536.9M338.8,264.2A139.8 186.5 -14.2 0 1 528,233.7A139.8 186.5 -14.2 0 1 590.1,481.2A139.8 186.5 -14.2 0 1 408.8,543.3M342.8,256.9A141.7 189 -14.2 0 1 532.5,231.7A141.7 189 -14.2 0 1 596.1,478.1A141.7 189 -14.2 0 1 418.2,549.2M348.7,247.5A143.5 191.3 -14.2 0 1 539.3,231.8A143.5 191.3 -14.2 0 1 601,477.7A143.5 191.3 -14.2 0 1 425.4,553.3M353.4,240.6A145.1 193.5 -14.2 0 1 544.5,230.7A145.1 193.5 -14.2 0 1 606.1,476.1A145.1 193.5 -14.2 0 1 432.8,557.2M358.4,233.8A146.7 195.6 -14.2 0 1 549.7,229.7A146.7 195.6 -14.2 0 1 611.1,474.5A146.7 195.6 -14.2 0 1 440.5,560.8M363.7,227.2A148.2 197.6 -14.2 0 1 554.1,228.2A148.2 197.6 -14.2 0 1 616.7,470.8A148.2 197.6 -14.2 0 1 450.8,565.1M369.2,220.9A149.5 199.4 -14.2 0 1 560,228.3A149.5 199.4 -14.2 0 1 620.9,470.9A149.5 199.4 -14.2 0 1 456.1,567.1M375.1,214.7A150.8 201.1 -14.2 0 1 565.1,227.8A150.8 201.1 -14.2 0 1 625.6,468.9A150.8 201.1 -14.2 0 1 464.2,569.8M381.1,208.8A152 202.8 -14.2 0 1 570.2,227.4A152 202.8 -14.2 0 1 630.3,466.9A152 202.8 -14.2 0 1 472.3,572.1M387.5,203A153.2 204.3 -14.2 0 1 575.2,227.2A153.2 204.3 -14.2 0 1 634.8,464.7A153.2 204.3 -14.2 0 1 480.6,574.2M391.8,199.3A154.2 205.6 -14.2 0 1 579.5,226.2A154.2 205.6 -14.2 0 1 639,463.5A154.2 205.6 -14.2 0 1 486.2,575.4M398.5,194A155.2 206.9 -14.2 0 1 584.4,226.2A155.2 206.9 -14.2 0 1 643.4,461.2A155.2 206.9 -14.2 0 1 494.6,576.9M403.2,190.6A156 208.1 -14.2 0 1 587.8,224.6A156 208.1 -14.2 0 1 647.9,457.7A156 208.1 -14.2 0 1 503.1,578M410.2,185.8A156.8 209.2 -14.2 0 1 593.5,225.6A156.8 209.2 -14.2 0 1 651.6,457.4A156.8 209.2 -14.2 0 1 508.8,578.6M415.1,182.7A157.6 210.1 -14.2 0 1 596.8,224.2A157.6 210.1 -14.2 0 1 656,453.8A157.6 210.1 -14.2 0 1 517.4,579.2M422.5,178.3A158.2 211 -14.2 0 1 602.3,225.5A158.2 211 -14.2 0 1 659.5,453.4A158.2 211 -14.2 0 1 523.1,579.4M427.5,175.5A158.8 211.8 -14.2 0 1 659.9,330.3A158.8 211.8 -14.2 0 1 531.7,579.5M435.2,171.7A159.3 212.5 -14.2 0 1 663.7,331.2A159.3 212.5 -14.2 0 1 537.5,579.3M440.4,169.2A159.7 213 -14.2 0 1 667.1,330.4A159.7 213 -14.2 0 1 543.2,579M448.3,165.9A160.1 213.5 -14.2 0 1 670.3,329.6A160.1 213.5 -14.2 0 1 551.8,578.2M453.7,163.8A160.4 213.9 -14.2 0 1 673.5,328.8A160.4 213.9 -14.2 0 1 557.5,577.5M459.2,161.9A160.6 214.2 -14.2 0 1 676.1,326.2A160.6 214.2 -14.2 0 1 566,576.1M467.4,159.3A160.8 214.4 -14.2 0 1 679.6,327.2A160.8 214.4 -14.2 0 1 571.7,575M472.9,157.7A160.8 214.5 -14.2 0 1 682.5,326.5A160.8 214.5 -14.2 0 1 577.3,573.8M478.5,156.3A160.8 214.5 -14.2 0 1 685,323.9A160.8 214.5 -14.2 0 1 585.7,571.6M486.9,154.5A160.8 214.4 -14.2 0 1 688.3,325A160.8 214.4 -14.2 0 1 591.2,570M492.6,153.5A160.6 214.2 -14.2 0 1 691,324.3A160.6 214.2 -14.2 0 1 596.7,568.2M501.1,152.2A160.4 213.9 -14.2 0 1 693.7,323.6A160.4 213.9 -14.2 0 1 604.8,565.3M506.9,151.6A160.1 213.6 -14.2 0 1 696.3,323A160.1 213.6 -14.2 0 1 610.2,563.2M512.6,151.1A159.8 213.1 -14.2 0 1 698.4,320.5A159.8 213.1 -14.2 0 1 618,559.7M521.2,150.6A159.4 212.5 -14.2 0 1 701.3,321.7A159.4 212.5 -14.2 0 1 623.2,557.2M527,150.5A158.9 211.9 -14.2 0 1 703.7,321.1A158.9 211.9 -14.2 0 1 628.4,554.6M535.5,150.6A158.3 211.1 -14.2 0 1 706.1,320.5A158.3 211.1 -14.2 0 1 635.9,550.4M541.3,150.9A157.7 210.2 -14.2 0 1 708.3,319.9A157.7 210.2 -14.2 0 1 640.8,547.5M549.8,151.6A156.9 209.3 -14.2 0 1 710.5,319.4A156.9 209.3 -14.2 0 1 648,542.8M555.6,152.3A156.1 208.2 -14.2 0 1 712.6,318.8A156.1 208.2 -14.2 0 1 652.8,539.6M564,153.5A155.3 207.1 -14.2 0 1 714.7,318.3A155.3 207.1 -14.2 0 1 659.6,534.4M569.7,154.6A154.3 205.8 -14.2 0 1 716.2,316.1A154.3 205.8 -14.2 0 1 666.3,529.1M578,156.4A153.3 204.4 -14.2 0 1 718.5,317.3A153.3 204.4 -14.2 0 1 670.6,525.3M586.2,158.5A152.2 202.9 -14.2 0 1 720.3,316.9A152.2 202.9 -14.2 0 1 676.9,519.5M591.7,160.1A151 201.3 -14.2 0 1 721.6,314.7A151 201.3 -14.2 0 1 682.9,513.5M599.8,162.8A149.7 199.6 -14.2 0 1 723.3,314.3A149.7 199.6 -14.2 0 1 688.6,507.3M607.7,165.8A148.3 197.8 -14.2 0 1 724.8,314A148.3 197.8 -14.2 0 1 694.1,500.8M615.5,169.1A146.8 195.8 -14.2 0 1 726.3,313.6A146.8 195.8 -14.2 0 1 699.3,494.2M623.1,172.7A145.3 193.8 -14.2 0 1 727.7,313.3A145.3 193.8 -14.2 0 1 704.3,487.4M633,177.9A143.6 191.6 -14.2 0 1 729.4,314.6A143.6 191.6 -14.2 0 1 708.9,480.4M640.2,182.1A141.9 189.2 -14.2 0 1 730.6,314.3A141.9 189.2 -14.2 0 1 713.2,473.3M649.4,188.1A140 186.8 -14.2 0 1 718.6,463.6M656.1,192.9A138.1 184.1 -14.2 0 1 723.4,453.7M666.9,201.4A136 181.4 -14.2 0 1 727.7,443.6M674.9,208.6A133.8 178.5 -14.2 0 1 731.4,433.5M684.5,218.2A131.5 175.4 -14.2 0 1 735.3,420.6M693.3,228.2A129.1 172.1 -14.2 0 1 738.9,404.8M704.6,243.1A126.5 168.7 -14.2 0 1 741.2,389.1M715.8,261.1A123.8 165 -14.2 0 1 742.6,368M731.8,297.9A120.9 161.2 -14.2 0 1 739.4,327.9M690.2,491.9A73.8 117.7 -170 0 1 641.1,504.3M641.1,286.7A73.8 117.7 -170 0 1 690.2,274.3M707.8,480.4A85.3 136.1 -170 0 1 602.8,507M602.8,294.5A85.3 136.1 -170 0 1 707.8,268M691.6,501A88.6 141.4 -170 0 1 612.1,521.1M612.1,272.7A88.6 141.4 -170 0 1 691.6,252.6M688.1,505.9A91.8 146.4 -170 0 1 608.7,525.9M608.7,266.6A91.8 146.4 -170 0 1 688.1,246.6M704.6,486.9A94.7 151 -170 0 1 576.4,507.4M551.4,447.5A94.7 151 -170 0 1 551.4,371.1M576.4,298.6A94.7 151 -170 0 1 713.4,263.9M697.2,496.9A97.5 155.5 -170 0 1 578.7,519M578.7,282.8A97.5 155.5 -170 0 1 704.2,251.1M689.2,506.6A100.1 159.6 -170 0 1 548.8,483.4A100.1 159.6 -170 0 1 588.9,260A100.1 159.6 -170 0 1 728.4,288.3M682.2,514.2A102.5 163.5 -170 0 1 553.1,505M544.7,488.9A102.5 163.5 -170 0 1 544.7,324.2M553.1,303.8A102.5 163.5 -170 0 1 634.6,224A102.5 163.5 -170 0 1 716.1,262.6M674.8,521.5A104.9 167.3 -170 0 1 551.4,512.7M532.4,472A104.9 167.3 -170 0 1 532.4,344.3M551.4,294A104.9 167.3 -170 0 1 710.9,253.7M666.9,528.5A107.1 170.8 -170 0 1 529.5,481.4A107.1 170.8 -170 0 1 570.2,255.1A107.1 170.8 -170 0 1 715.2,260M660.6,533.7A109.2 174.1 -170 0 1 523.6,481.1A109.2 174.1 -170 0 1 564.5,253.3A109.2 174.1 -170 0 1 711,253M654,538.7A111.1 177.3 -170 0 1 517.7,480.6A111.1 177.3 -170 0 1 558.8,251.7A111.1 177.3 -170 0 1 706.6,246M647.2,543.4A113 180.2 -170 0 1 512,480A113 180.2 -170 0 1 553.2,250.3A113 180.2 -170 0 1 701.9,239.3M640.3,547.8A114.8 183.1 -170 0 1 506.3,479.2A114.8 183.1 -170 0 1 547.6,249.1A114.8 183.1 -170 0 1 696.9,232.6M633.1,552A116.4 185.7 -170 0 1 500.7,478.2A116.4 185.7 -170 0 1 542.1,248.1A116.4 185.7 -170 0 1 691.7,226.2M627.9,554.8A118 188.3 -170 0 1 495.8,478.9A118 188.3 -170 0 1 536,248A118 188.3 -170 0 1 686.2,220M620.5,558.6A119.5 190.6 -170 0 1 490.1,476.8A119.5 190.6 -170 0 1 531.6,245.7A119.5 190.6 -170 0 1 682.1,215.7M615.1,561A120.9 192.9 -170 0 1 485.3,477.3A120.9 192.9 -170 0 1 525.6,246A120.9 192.9 -170 0 1 676.2,209.9M607.5,564.2A122.3 195 -170 0 1 479.8,474.9A122.3 195 -170 0 1 521.3,243.9A122.3 195 -170 0 1 671.9,205.8M602,566.4A123.5 197 -170 0 1 474.9,474.3A123.5 197 -170 0 1 516.5,242.7A123.5 197 -170 0 1 667.4,201.9M596.4,568.3A124.7 198.9 -170 0 1 470.3,474.7A124.7 198.9 -170 0 1 510.6,243.4A124.7 198.9 -170 0 1 661,196.7M588.5,570.8A125.8 200.7 -170 0 1 465,471.9A125.8 200.7 -170 0 1 506.4,241.6A125.8 200.7 -170 0 1 656.4,193.1M582.8,572.4A126.8 202.3 -170 0 1 460.3,471.1A126.8 202.3 -170 0 1 501.7,240.8A126.8 202.3 -170 0 1 651.6,189.6M577.1,573.8A127.8 203.8 -170 0 1 455.7,470.2A127.8 203.8 -170 0 1 497.1,240A127.8 203.8 -170 0 1 646.7,186.3M571.3,575.1A128.7 205.3 -170 0 1 451.4,470.2A128.7 205.3 -170 0 1 491.3,241.2A128.7 205.3 -170 0 1 639.7,181.8M565.5,576.2A129.5 206.6 -170 0 1 446.9,469.2A129.5 206.6 -170 0 1 486.7,240.6A129.5 206.6 -170 0 1 634.6,178.8M559.7,577.2A130.3 207.8 -170 0 1 442.5,468.1A130.3 207.8 -170 0 1 482.1,240.1A130.3 207.8 -170 0 1 629.5,176M553.9,577.9A131 208.9 -170 0 1 438.1,466.9A131 208.9 -170 0 1 477.6,239.8A131 208.9 -170 0 1 624.3,173.3M548,578.6A131.6 209.9 -170 0 1 432.4,349A131.6 209.9 -170 0 1 619,170.7M542.2,579A132.1 210.8 -170 0 1 428.3,348.3A132.1 210.8 -170 0 1 613.6,168.3M534,579.4A132.6 211.6 -170 0 1 424.7,345.8A132.6 211.6 -170 0 1 608.2,166M528.1,579.5A133.1 212.3 -170 0 1 420.8,345.1A133.1 212.3 -170 0 1 602.7,163.9M522.2,579.4A133.5 212.9 -170 0 1 417,344.4A133.5 212.9 -170 0 1 597.2,161.9M516.4,579.2A133.8 213.4 -170 0 1 413.2,343.7A133.8 213.4 -170 0 1 591.6,160.1M510.5,578.8A134 213.8 -170 0 1 409.5,343.1A134 213.8 -170 0 1 586,158.5M507,578.5A134.2 214.1 -170 0 1 405.6,344.3A134.2 214.1 -170 0 1 580.4,157M501.2,577.8A134.4 214.3 -170 0 1 402,343.6A134.4 214.3 -170 0 1 574.7,155.6M495.4,577A134.5 214.5 -170 0 1 398.4,343A134.5 214.5 -170 0 1 568.9,154.4M489.6,576A134.5 214.5 -170 0 1 395,342.4A134.5 214.5 -170 0 1 563.2,153.4M483.9,574.9A134.4 214.4 -170 0 1 391.6,341.8A134.4 214.4 -170 0 1 557.4,152.5M478.2,573.6A134.3 214.3 -170 0 1 388.2,341.2A134.3 214.3 -170 0 1 551.6,151.8M472.5,572.2A134.2 214 -170 0 1 384.9,340.6A134.2 214 -170 0 1 545.8,151.2M466.9,570.6A134 213.7 -170 0 1 381.7,340A134 213.7 -170 0 1 539.9,150.8M461.3,568.8A133.7 213.2 -170 0 1 378.5,339.5A133.7 213.2 -170 0 1 534.1,150.6M455.7,566.9A133.4 212.7 -170 0 1 375.4,338.9A133.4 212.7 -170 0 1 528.2,150.5M450.2,564.9A133 212.1 -170 0 1 372.3,338.4A133 212.1 -170 0 1 522.3,150.6M444.8,562.7A132.5 211.3 -170 0 1 369.3,337.8A132.5 211.3 -170 0 1 516.5,150.8M439.4,560.3A132 210.5 -170 0 1 366.4,337.3A132 210.5 -170 0 1 510.6,151.2M434.1,557.8A131.4 209.6 -170 0 1 363.5,336.8A131.4 209.6 -170 0 1 504.8,151.8M428.9,555.2A130.7 208.5 -170 0 1 360.7,336.3A130.7 208.5 -170 0 1 498.9,152.5M423.7,552.4A130 207.4 -170 0 1 357.9,335.8A130 207.4 -170 0 1 493.1,153.4M416.6,548.2A129.3 206.2 -170 0 1 355.6,333.6A129.3 206.2 -170 0 1 487.3,154.4M411.6,545.1A128.4 204.8 -170 0 1 352.9,333.1A128.4 204.8 -170 0 1 481.5,155.6M406.7,541.8A127.5 203.4 -170 0 1 350.4,332.7A127.5 203.4 -170 0 1 475.8,157M401.8,538.4A126.5 201.8 -170 0 1 347.6,334A126.5 201.8 -170 0 1 467.8,159.2M397.1,534.8A125.5 200.1 -170 0 1 345.2,333.5A125.5 200.1 -170 0 1 462.2,160.9M390.6,529.7A124.3 198.3 -170 0 1 343.1,331.4A124.3 198.3 -170 0 1 456.5,162.8M386.1,525.8A123.1 196.4 -170 0 1 340.9,331A123.1 196.4 -170 0 1 451,164.8M381.8,521.8A121.9 194.4 -170 0 1 338.4,332.3A121.9 194.4 -170 0 1 443.3,168M375.8,516A120.5 192.2 -170 0 1 336.5,330.3A120.5 192.2 -170 0 1 437.9,170.4M371.7,511.8A119.1 189.9 -170 0 1 334.2,331.5A119.1 189.9 -170 0 1 430.5,174M366.1,505.6A117.5 187.5 -170 0 1 332.6,329.6A117.5 187.5 -170 0 1 425.2,176.8M362.3,501.1A115.9 184.9 -170 0 1 330.4,330.9A115.9 184.9 -170 0 1 418,180.9M357.2,494.6A114.2 182.2 -170 0 1 328.6,330.5A114.2 182.2 -170 0 1 411,185.3M352.3,487.9A112.4 179.3 -170 0 1 327,330.2A112.4 179.3 -170 0 1 404.2,189.9M347.7,481.1A110.5 176.3 -170 0 1 325.4,329.9A110.5 176.3 -170 0 1 397.5,194.8M335.7,459A108.5 173.1 -170 0 1 335.7,284.7M343.4,265.8A108.5 173.1 -170 0 1 391.1,199.9M338.3,464.9A106.4 169.7 -170 0 1 322.8,327.9A106.4 169.7 -170 0 1 384.9,205.3M329.1,444.3A104.2 166.1 -170 0 1 329.1,296.9M343.6,260.4A104.2 166.1 -170 0 1 377.3,212.5M349.5,247.9A101.8 162.3 -170 0 1 370.1,220M325.8,436.3A99.3 158.3 -170 0 1 328.3,292.8M339.3,265.6A99.3 158.3 -170 0 1 363.3,227.7M352.8,241.5A96.6 154.1 -170 0 1 355.5,237.6M318.9,412.4A93.8 149.6 -170 0 1 330.6,282.5M333.5,275.5A93.8 149.6 -170 0 1 347.2,249.7M573.3,559.8A26.5 125.4 -90 0 0 647.5,543.2M607.4,552.8A27.8 131.5 -90 0 0 645.3,543.2M610.8,549.4A29 137.1 -90 0 0 650.3,539.4M550.6,551.6A30.1 142.3 -90 0 0 665.6,529.6M568.9,547.4A31.1 147.2 -90 0 0 671,525M380.2,520.4A32.1 151.8 -90 0 0 528.4,545.2A32.1 151.8 -90 0 0 676.1,520.2M390.3,524.2A33 156.2 -90 0 0 480.1,540.1M531.1,541.7A33 156.2 -90 0 0 681,515.5M414.9,528.3A33.9 160.3 -90 0 0 436.4,532.1M542.4,538A33.9 160.3 -90 0 0 685,511.3M367,506.6A34.7 164.2 -90 0 0 528.4,534.6A34.7 164.2 -90 0 0 689.4,506.4M362.8,501.7A35.5 167.9 -90 0 0 528.4,531A35.5 167.9 -90 0 0 693.5,501.6M359.4,497.4A36.2 171.4 -90 0 0 360.5,498.7M366.2,502.9A36.2 171.4 -90 0 0 501.6,526.9M522.4,527.3A36.2 171.4 -90 0 0 696.9,497.3M355.6,492.5A36.9 174.7 -90 0 0 528.4,523.6A36.9 174.7 -90 0 0 700.7,492.4M352.5,488.2A37.6 177.8 -90 0 0 528.4,519.9A37.6 177.8 -90 0 0 703.8,488.1M349.2,483.3A38.2 180.7 -90 0 0 526.8,516.1A38.2 180.7 -90 0 0 706.7,483.8M346.4,479A38.8 183.5 -90 0 0 528.4,512.3A38.8 183.5 -90 0 0 709.9,478.8M343.8,474.6A39.3 186.2 -90 0 0 528.4,508.4A39.3 186.2 -90 0 0 712.5,474.5M340.9,469.6A39.9 188.7 -90 0 0 528.4,504.6A39.9 188.7 -90 0 0 715.4,469.5M338.5,465.3A40.4 191.1 -90 0 0 528.4,500.7A40.4 191.1 -90 0 0 717.8,465.1M335.9,460.2A40.8 193.3 -90 0 0 526.8,496.7A40.8 193.3 -90 0 0 720,460.8M333.8,455.9A41.3 195.4 -90 0 0 528.4,492.8A41.3 195.4 -90 0 0 722.5,455.7M331.8,451.5A41.7 197.4 -90 0 0 528.4,488.8A41.7 197.4 -90 0 0 724.4,451.4M329.7,446.4A42.1 199.2 -90 0 0 526.7,484.8A42.1 199.2 -90 0 0 726.3,447M327.9,442.1A42.5 201 -90 0 0 528.5,480.8A42.5 201 -90 0 0 728.3,441.9M326.3,437.7A42.8 202.6 -90 0 0 528.5,476.7A42.8 202.6 -90 0 0 729.9,437.6M324.5,432.6A43.1 204.1 -90 0 0 526.7,472.6A43.1 204.1 -90 0 0 731.4,433.2M323.1,428.2A43.4 205.5 -90 0 0 528.5,468.5A43.4 205.5 -90 0 0 733.1,428.1M321.8,423.8A43.7 206.8 -90 0 0 528.5,464.4A43.7 206.8 -90 0 0 734.4,423.7M320.7,419.5A44 208 -90 0 0 528.5,460.3A44 208 -90 0 0 735.6,419.3M319.3,414.3A44.2 209.1 -90 0 0 528.5,456.1A44.2 209.1 -90 0 0 736.9,414.2M318.4,409.9A44.4 210 -90 0 0 528.5,451.9A44.4 210 -90 0 0 737.9,409.8M317.5,405.5A44.6 210.9 -90 0 0 528.5,447.7A44.6 210.9 -90 0 0 738.8,405.4M316.5,400.4A44.7 211.7 -90 0 0 526.6,443.5A44.7 211.7 -90 0 0 739.5,401M315.9,396A44.9 212.4 -90 0 0 528.5,439.2A44.9 212.4 -90 0 0 740.4,395.8M315.3,391.6A45 213 -90 0 0 528.5,434.9A45 213 -90 0 0 741,391.4M314.8,387.2A45.1 213.5 -90 0 0 528.5,430.6A45.1 213.5 -90 0 0 741.5,387M314.3,382A45.2 213.9 -90 0 0 526.6,426.3A45.2 213.9 -90 0 0 741.8,382.6M314,377.6A45.3 214.2 -90 0 0 528.5,422A45.3 214.2 -90 0 0 742.2,377.4M313.8,373.2A45.3 214.4 -90 0 0 528.5,417.6A45.3 214.4 -90 0 0 742.4,373M313.7,368.8A45.3 214.5 -90 0 0 528.5,413.3A45.3 214.5 -90 0 0 742.6,368.6M313.6,363.6A45.3 214.5 -90 0 0 526.6,408.9A45.3 214.5 -90 0 0 742.6,364.2M313.7,359.2A45.3 214.4 -90 0 0 528.5,404.4A45.3 214.4 -90 0 0 742.5,359.1M313.9,354.8A45.3 214.2 -90 0 0 528.5,400A45.3 214.2 -90 0 0 742.3,354.7M314.1,350.4A45.2 214 -90 0 0 528.5,395.6A45.2 214 -90 0 0 742.1,350.3M314.5,345.2A45.1 213.6 -90 0 0 528.5,391.1A45.1 213.6 -90 0 0 741.7,345.1M315,340.8A45 213.2 -90 0 0 528.5,386.6A45 213.2 -90 0 0 741.2,340.7M315.5,336.4A44.9 212.6 -90 0 0 528.5,382.1A44.9 212.6 -90 0 0 740.7,336.3M316.3,331.3A44.8 211.9 -90 0 0 526.6,377.5A44.8 211.9 -90 0 0 740,331.9M317,326.9A44.6 211.2 -90 0 0 528.5,373A44.6 211.2 -90 0 0 739.2,326.7M317.9,322.5A44.5 210.3 -90 0 0 528.5,368.4A44.5 210.3 -90 0 0 738.3,322.3M318.8,318.1A44.3 209.4 -90 0 0 528.5,363.8A44.3 209.4 -90 0 0 737.4,317.9M320,312.9A44 208.3 -90 0 0 526.6,359.2A44 208.3 -90 0 0 736.3,313.5M321.2,308.5A43.8 207.2 -90 0 0 528.5,354.5A43.8 207.2 -90 0 0 735,308.4M322.4,304.2A43.5 205.9 -90 0 0 528.5,349.9A43.5 205.9 -90 0 0 733.7,304M324,299A43.2 204.6 -90 0 0 526.7,345.2A43.2 204.6 -90 0 0 732.4,299.6M325.5,294.6A42.9 203.1 -90 0 0 528.5,340.5A42.9 203.1 -90 0 0 730.7,294.5M327.1,290.3A42.6 201.5 -90 0 0 528.5,335.7A42.6 201.5 -90 0 0 729.1,290.1M328.7,285.9A42.2 199.8 -90 0 0 528.4,331A42.2 199.8 -90 0 0 727.4,285.7M330.8,280.8A41.8 198 -90 0 0 528.4,326.2A41.8 198 -90 0 0 725.3,280.6M332.8,276.4A41.4 196.1 -90 0 0 528.4,321.4A41.4 196.1 -90 0 0 723.4,276.3M334.8,272.1A41 194 -90 0 0 528.4,316.6A41 194 -90 0 0 721.3,271.9M337.3,267A40.5 191.8 -90 0 0 528.4,311.7A40.5 191.8 -90 0 0 718.8,266.9M339.6,262.7A40 189.5 -90 0 0 528.4,306.8A40 189.5 -90 0 0 716.5,262.5M342.4,257.6A39.5 187 -90 0 0 526.8,301.9A39.5 187 -90 0 0 714.1,258.2M345,253.3A39 184.4 -90 0 0 528.4,297A39 184.4 -90 0 0 711.1,253.2M347.7,249A38.4 181.7 -90 0 0 528.4,292A38.4 181.7 -90 0 0 708.4,248.8M351,244A37.8 178.8 -90 0 0 528.4,287A37.8 178.8 -90 0 0 705.1,243.9M354,239.7A37.1 175.7 -90 0 0 528.4,281.9A37.1 175.7 -90 0 0 702.1,239.5M357.7,234.7A36.5 172.5 -90 0 0 528.4,276.8A36.5 172.5 -90 0 0 698.4,234.6M361.1,230.5A35.7 169.1 -90 0 0 361.6,242.2M372.6,250A35.7 169.1 -90 0 0 490.4,270.8M528.4,271.7A35.7 169.1 -90 0 0 695,230.3M365.1,225.6A35 165.5 -90 0 0 528.4,266.5A35 165.5 -90 0 0 691,225.5M368.9,221.3A34.2 161.6 -90 0 0 367.7,231.4M392.7,245.8A34.2 161.6 -90 0 0 465.2,258.7M536.8,261.3A34.2 161.6 -90 0 0 688.5,223M373.3,216.5A33.3 157.6 -90 0 0 441,250.5A33.3 157.6 -90 0 0 615.7,250.5A33.3 157.6 -90 0 0 682.8,216.4M378.1,211.7A32.4 153.3 -90 0 0 375.9,222.4M401.1,236.6A32.4 153.3 -90 0 0 466,248M536.4,250.7A32.4 153.3 -90 0 0 680.3,214.4M383.1,207A31.4 148.8 -90 0 0 380.1,210.8M569.4,244.2A31.4 148.8 -90 0 0 676.1,217.2M387.8,202.8A30.4 144 -90 0 0 385.9,214.4M401.1,223.9A30.4 144 -90 0 0 483.8,238.5M530.9,240A30.4 144 -90 0 0 670.3,204.8M393.3,198.1A29.3 138.8 -90 0 0 390.9,200.7M573.5,232.9A29.3 138.8 -90 0 0 665.3,209.7M406.1,188.6A26.9 127.5 -90 0 0 402.1,192.2M569.8,221.9A26.9 127.5 -90 0 0 654.1,200.6" fill="none" stroke="#000" stroke-width="1.4"/>
<circle cx="528.1" cy="365" r="212.5" fill="none" stroke="#000" stroke-width="6"/>
<path d="M732.8,416A211 211 0 0 1 678.6,512.9A211 211 0 0 1 582.7,568.8" fill="none" stroke="#000" stroke-width="8" stroke-linecap="round" opacity=".9"/>
</g></g>
<path d="M336.1,340.7L338.2,333.5L341.6,328.3L345.9,323.1L351.3,320.8L357.2,320.5L364.2,319.6L370.3,320.3L374.2,321L379.6,321.3L384.7,323L389.9,322.1L395.1,324.9L399.7,324.1L404.8,327.4L410.8,327.6L415.6,329.1L419.8,327.7L425.2,330.4L429.8,330.5L434.9,332.5L439.6,333.1L444.9,336.2L450.1,335.8L454.6,337.9L459.5,338.5L465,339.7L470,342.1L475.3,345L480.3,346.5L484.8,348.1L489.7,349.5L494.7,350.8L499.3,352L505.8,353.7L510.3,356.9L515.4,358.1L520.2,358.6L524.3,360.5L529.4,361.7L534.4,364.7L539.5,367.4L545.3,367.6L550.3,368.1L555.7,371.3L560.4,371.6L565.5,373.8L570.3,376.7L575.2,377.4L580.1,379.2L584.5,383.3L590.5,386.5L595.6,387.6L599.3,390L605.7,393.4L610,394.9L614.5,396.5L619.3,400.4L625.2,399.6L629.9,400.9L634.5,404.7L640.2,403.3L644.6,403.2L650.7,401.8L654.3,399.1L659.3,400.5L665.1,398.6L669.5,395.2L675.3,395.8L679.7,391.6L685.6,390.8L690.4,388.9L695.3,389.9L700.4,387.1L705.4,385.2L709.7,384.9L715.6,382.9L720.6,382.8L725.8,379.2L729.5,376.7L735.5,376.2L740,372L740.6,407.2L736.5,411.3L733,414.4L729.4,417.1L724.7,419L718.7,421.5L713.7,420.4L708.7,421.5L702.4,422.3L697.7,424.1L692.7,423.9L687.2,424.6L682.2,425.1L677,428.5L673.2,427L666.7,428.1L662.8,430.9L656.7,431.2L651.7,432L646.9,434.9L640.4,435.6L635.6,437.4L629.2,434.7L625.8,433.2L620.5,432.4L615.4,431L609.2,427.5L604.4,425.8L600.7,424.8L595.5,422.4L590.2,421L585.7,418.9L580.5,413.9L574.8,411.3L570.1,411.3L564.3,407L559.8,405.2L555.5,403.5L550.2,402L545.1,401.4L540.7,396.8L535.5,395.1L529.4,392.9L525,392.4L519.8,386.9L515.6,385.6L510,386.2L505,383.2L500.5,380.2L495.1,379.7L490.8,379.6L484.3,376.2L479.9,376.4L474.7,374L470.7,374.5L464.9,373.3L459.7,369.7L455,370.5L450.6,370.5L445.4,368.8L440.3,367.6L435.4,367.5L429.8,363.7L424.6,363.1L419.8,364L414.3,362L410.5,360.6L404.3,359.8L399.3,360.8L394.5,358L390.1,360.7L384.4,361.8L378.2,362.6L373.7,361.2L368.7,363.1L363.6,362L357.6,363.9L352.1,363.7L345.5,365.1L340.4,366.8L335,366Z" fill="#000" stroke="#000" stroke-width="1.5" stroke-linejoin="round"/>
<rect x="499" y="0" width="59" height="50" fill="#000"/>
<ellipse cx="530" cy="48" rx="90" ry="19" fill="#000"/>
<path d="M440,48L440,217.4A90 19 0 0 0 530,236.4A90 19 0 0 0 620,217.4L620,48A90 19 0 0 1 530,67A90 19 0 0 1 440,48Z" fill="url(#gC)"/>
<g clip-path="url(#cC)" fill="none" stroke="#000">
<path d="M440,48L440,217.4M440.1,49.1L440.1,218.5M440.6,50.2L440.6,219.6M441.3,51.2L441.3,220.6M442.3,52.3L442.3,221.7M443.6,53.4L443.6,222.8M445.2,54.4L445.2,223.8M447.1,55.4L447.1,224.8M449.2,56.4L449.2,225.8M451.6,57.4L451.6,226.8M454.3,58.3L454.3,227.7M457.2,59.2L457.2,228.6M460.3,60L460.3,229.4M463.7,60.9L463.7,230.3M467.3,61.6L467.3,231M471.1,62.4L471.1,231.8M475,63.1L475,232.5M479.2,63.7L479.2,233.1M483.5,64.3L483.5,233.7M488,64.8L488,234.2M492.6,65.3L492.6,234.7M497.3,65.7L497.3,235.1M502.2,66.1L502.2,235.5M507.1,66.4L507.1,235.8M512.1,66.6L512.1,236M517.2,66.8L517.2,236.2M522.3,66.9L522.3,236.3M527.4,67L527.4,236.4M532.6,67L532.6,236.4M537.7,66.9L537.7,236.3M542.8,66.8L542.8,236.2M547.9,66.6L547.9,236M552.9,66.4L552.9,235.8M557.8,66.1L557.8,235.5M562.7,65.7L562.7,235.1M567.4,65.3L567.4,234.7M572,64.8L572,234.2M576.5,64.3L576.5,233.7M580.8,63.7L580.8,233.1M585,63.1L585,232.5M588.9,62.4L588.9,231.8M592.7,61.6L592.7,231M596.3,60.9L596.3,230.3M599.7,60L599.7,229.4M602.8,59.2L602.8,228.6M605.7,58.3L605.7,227.7M608.4,57.4L608.4,226.8M610.8,56.4L610.8,225.8M612.9,55.4L612.9,224.8M614.8,54.4L614.8,223.8M616.4,53.4L616.4,222.8M617.7,52.3L617.7,221.7M618.7,51.2L618.7,220.6M619.4,50.2L619.4,219.6M619.9,49.1L619.9,218.5M620,48L620,217.4" stroke-width="1.05"/>
<path d="M440,50.5A90 19 0 0 0 530,69.5A90 19 0 0 0 620,50.5M440,54.6A90 19 0 0 0 530,73.6A90 19 0 0 0 620,54.6M440,58.6A90 19 0 0 0 530,77.6A90 19 0 0 0 620,58.6M440,62.7A90 19 0 0 0 530,81.7A90 19 0 0 0 620,62.7M440,66.7A90 19 0 0 0 530,85.8A90 19 0 0 0 620,66.7M440,70.8A90 19 0 0 0 530,89.8A90 19 0 0 0 620,70.8M440,74.9A90 19 0 0 0 530,93.9A90 19 0 0 0 620,74.9M440,78.9A90 19 0 0 0 530,97.9A90 19 0 0 0 620,78.9M440,83A90 19 0 0 0 530,102A90 19 0 0 0 620,83M440,87A90 19 0 0 0 530,106.1A90 19 0 0 0 620,87M440,91.1A90 19 0 0 0 530,110.1A90 19 0 0 0 620,91.1M440,95.2A90 19 0 0 0 530,114.2A90 19 0 0 0 620,95.2M440,99.2A90 19 0 0 0 530,118.2A90 19 0 0 0 620,99.2M440,103.3A90 19 0 0 0 530,122.3A90 19 0 0 0 620,103.3M440,107.3A90 19 0 0 0 530,126.4A90 19 0 0 0 620,107.3M440,111.4A90 19 0 0 0 530,130.4A90 19 0 0 0 620,111.4M440,115.5A90 19 0 0 0 530,134.5A90 19 0 0 0 620,115.5M440,119.5A90 19 0 0 0 530,138.5A90 19 0 0 0 620,119.5M440,123.6A90 19 0 0 0 530,142.6A90 19 0 0 0 620,123.6M440,127.6A90 19 0 0 0 530,146.7A90 19 0 0 0 620,127.6M440,131.7A90 19 0 0 0 530,150.7A90 19 0 0 0 620,131.7M440,135.8A90 19 0 0 0 530,154.8A90 19 0 0 0 620,135.8M440,139.8A90 19 0 0 0 530,158.8A90 19 0 0 0 620,139.8M440,143.9A90 19 0 0 0 530,162.9A90 19 0 0 0 620,143.9M440,147.9A90 19 0 0 0 530,167A90 19 0 0 0 620,147.9M440,152A90 19 0 0 0 530,171A90 19 0 0 0 620,152M440,156.1A90 19 0 0 0 530,175.1A90 19 0 0 0 620,156.1M440,160.1A90 19 0 0 0 530,179.1A90 19 0 0 0 620,160.1M440,164.2A90 19 0 0 0 530,183.2A90 19 0 0 0 620,164.2M440,168.2A90 19 0 0 0 530,187.3A90 19 0 0 0 620,168.2M440,172.3A90 19 0 0 0 530,191.3A90 19 0 0 0 620,172.3M440,176.4A90 19 0 0 0 530,195.4A90 19 0 0 0 620,176.4M440,180.4A90 19 0 0 0 530,199.4A90 19 0 0 0 620,180.4M440,184.5A90 19 0 0 0 530,203.5A90 19 0 0 0 620,184.5M440,188.5A90 19 0 0 0 530,207.6A90 19 0 0 0 620,188.5M440,192.6A90 19 0 0 0 530,211.6A90 19 0 0 0 620,192.6M440,196.7A90 19 0 0 0 530,215.7A90 19 0 0 0 620,196.7M440,200.7A90 19 0 0 0 530,219.7A90 19 0 0 0 620,200.7M440,204.8A90 19 0 0 0 530,223.8A90 19 0 0 0 620,204.8M440,208.8A90 19 0 0 0 530,227.9A90 19 0 0 0 620,208.8M440,212.9A90 19 0 0 0 530,231.9A90 19 0 0 0 620,212.9M440,217A90 19 0 0 0 530,236A90 19 0 0 0 620,217" stroke-width="1.05"/>
</g>
<path d="M443,51.2A87 19 0 0 0 530,70.2A87 19 0 0 0 617,51.2" fill="none" stroke="#f0a224" stroke-width="1.6" stroke-dasharray="2.2 1.6" opacity=".9"/>
<path d="M440.7,45L440.7,217.4M619.3,45L619.3,211.4" stroke="#000" stroke-width="2.5" fill="none"/>
<path d="M102.6,423.2L377.2,353.8A53.2 71 -14.2 0 1 446.2,409.6A53.2 71 -14.2 0 1 412,491.4L137.4,560.8Z" fill="url(#gP)"/>
<g clip-path="url(#cLP)" fill="none" stroke="#000" stroke-opacity=".68">
<path d="M102.6,423.2L377.2,353.8M105.1,422.6L379.7,353.2M107.7,422.2L382.3,352.8M110.2,422L384.8,352.6M112.8,421.9L387.4,352.5M115.5,422L390.1,352.6M118.1,422.3L392.7,352.9M120.7,422.7L395.3,353.3M123.4,423.3L398,353.9M126,424.1L400.6,354.7M128.6,425L403.2,355.6M131.2,426.1L405.8,356.6M133.7,427.3L408.3,357.9M136.3,428.6L410.9,359.2M138.8,430.2L413.4,360.8M141.2,431.8L415.8,362.4M143.6,433.6L418.2,364.2M145.9,435.6L420.5,366.2M148.2,437.6L422.8,368.2M150.4,439.8L425,370.4M152.6,442.2L427.2,372.8M154.7,444.6L429.3,375.2M156.7,447.1L431.3,377.7M158.6,449.8L433.2,380.4M160.4,452.5L435,383.1M162.1,455.4L436.7,386M163.7,458.3L438.3,388.9M165.2,461.3L439.8,391.9M166.6,464.4L441.2,395M167.9,467.6L442.5,398.1M169.1,470.8L443.7,401.3M170.2,474L444.8,404.6M171.2,477.3L445.8,407.9M172,480.6L446.6,411.2M172.7,484L447.3,414.6M173.3,487.3L447.9,417.9M173.8,490.7L448.4,421.3M174.2,494.1L448.8,424.7M174.4,497.5L449,428.1M174.5,500.9L449.1,431.5M174.4,504.2L449,434.8M174.3,507.5L448.9,438.1M174,510.8L448.6,441.4M173.6,514.1L448.2,444.6M173,517.2L447.6,447.8M172.4,520.4L447,451M171.6,523.4L446.2,454M170.7,526.4L445.3,457M169.6,529.3L444.2,459.9M168.5,532.1L443.1,462.7M167.2,534.9L441.8,465.5M165.9,537.5L440.5,468.1M164.4,540L439,470.6M162.8,542.4L437.4,473M161.2,544.7L435.8,475.3M159.4,546.9L434,477.5M157.5,548.9L432.1,479.5M155.6,550.8L430.2,481.4M153.5,552.6L428.1,483.2M151.4,554.2L426,484.8M149.2,555.7L423.8,486.3M147,557L421.6,487.6M144.7,558.2L419.3,488.8M142.3,559.3L416.9,489.9M139.9,560.1L414.5,490.7M137.4,560.8L412,491.4" stroke-width="1.5"/>
<path d="M103.1,423A53.2 71 -14.2 0 1 172.1,478.8A53.2 71 -14.2 0 1 137.9,560.7M106.6,422.2A53.2 71 -14.2 0 1 175.6,477.9A53.2 71 -14.2 0 1 141.4,559.8M110.1,421.3A53.2 71 -14.2 0 1 179.1,477.1A53.2 71 -14.2 0 1 144.9,558.9M113.6,420.4A53.2 71 -14.2 0 1 182.6,476.2A53.2 71 -14.2 0 1 148.4,558.1M117.1,419.5A53.2 71 -14.2 0 1 186.1,475.3A53.2 71 -14.2 0 1 151.9,557.2M120.6,418.6A53.2 71 -14.2 0 1 189.6,474.4A53.2 71 -14.2 0 1 155.4,556.3M124.1,417.7A53.2 71 -14.2 0 1 193.1,473.5A53.2 71 -14.2 0 1 158.9,555.4M127.6,416.8A53.2 71 -14.2 0 1 196.6,472.6A53.2 71 -14.2 0 1 162.4,554.5M131.1,416A53.2 71 -14.2 0 1 200.1,471.8A53.2 71 -14.2 0 1 165.9,553.6M134.6,415.1A53.2 71 -14.2 0 1 203.6,470.9A53.2 71 -14.2 0 1 169.4,552.8M138.1,414.2A53.2 71 -14.2 0 1 207.1,470A53.2 71 -14.2 0 1 172.9,551.9M141.6,413.3A53.2 71 -14.2 0 1 210.6,469.1A53.2 71 -14.2 0 1 176.4,551M145.1,412.4A53.2 71 -14.2 0 1 214.1,468.2A53.2 71 -14.2 0 1 179.9,550.1M148.6,411.5A53.2 71 -14.2 0 1 217.6,467.3A53.2 71 -14.2 0 1 183.4,549.2M152.1,410.7A53.2 71 -14.2 0 1 221.1,466.4A53.2 71 -14.2 0 1 186.9,548.3M155.6,409.8A53.2 71 -14.2 0 1 224.6,465.6A53.2 71 -14.2 0 1 190.4,547.4M159.1,408.9A53.2 71 -14.2 0 1 228.1,464.7A53.2 71 -14.2 0 1 193.9,546.6M162.6,408A53.2 71 -14.2 0 1 231.6,463.8A53.2 71 -14.2 0 1 197.4,545.7M166.1,407.1A53.2 71 -14.2 0 1 235.1,462.9A53.2 71 -14.2 0 1 200.9,544.8M169.6,406.2A53.2 71 -14.2 0 1 238.6,462A53.2 71 -14.2 0 1 204.4,543.9M173.1,405.4A53.2 71 -14.2 0 1 242.1,461.1A53.2 71 -14.2 0 1 207.9,543M176.6,404.5A53.2 71 -14.2 0 1 245.6,460.3A53.2 71 -14.2 0 1 211.4,542.1M180.1,403.6A53.2 71 -14.2 0 1 249.1,459.4A53.2 71 -14.2 0 1 214.9,541.3M183.6,402.7A53.2 71 -14.2 0 1 252.6,458.5A53.2 71 -14.2 0 1 218.4,540.4M187.1,401.8A53.2 71 -14.2 0 1 256.1,457.6A53.2 71 -14.2 0 1 221.9,539.5M190.6,400.9A53.2 71 -14.2 0 1 259.6,456.7A53.2 71 -14.2 0 1 225.4,538.6M194.1,400A53.2 71 -14.2 0 1 263.1,455.8A53.2 71 -14.2 0 1 228.9,537.7M197.6,399.2A53.2 71 -14.2 0 1 266.6,454.9A53.2 71 -14.2 0 1 232.4,536.8M201.1,398.3A53.2 71 -14.2 0 1 270.1,454.1A53.2 71 -14.2 0 1 235.9,535.9M204.6,397.4A53.2 71 -14.2 0 1 273.6,453.2A53.2 71 -14.2 0 1 239.4,535.1M208.1,396.5A53.2 71 -14.2 0 1 277.1,452.3A53.2 71 -14.2 0 1 242.9,534.2M211.6,395.6A53.2 71 -14.2 0 1 280.6,451.4A53.2 71 -14.2 0 1 246.4,533.3M215.1,394.7A53.2 71 -14.2 0 1 284.1,450.5A53.2 71 -14.2 0 1 249.9,532.4M218.6,393.9A53.2 71 -14.2 0 1 287.6,449.6A53.2 71 -14.2 0 1 253.4,531.5M222.1,393A53.2 71 -14.2 0 1 291.1,448.8A53.2 71 -14.2 0 1 256.9,530.6M225.6,392.1A53.2 71 -14.2 0 1 294.6,447.9A53.2 71 -14.2 0 1 260.4,529.8M229.1,391.2A53.2 71 -14.2 0 1 298.1,447A53.2 71 -14.2 0 1 263.9,528.9M232.6,390.3A53.2 71 -14.2 0 1 301.6,446.1A53.2 71 -14.2 0 1 267.4,528M236.1,389.4A53.2 71 -14.2 0 1 305.1,445.2A53.2 71 -14.2 0 1 270.9,527.1M239.6,388.5A53.2 71 -14.2 0 1 308.6,444.3A53.2 71 -14.2 0 1 274.4,526.2M243.1,387.7A53.2 71 -14.2 0 1 312.1,443.4A53.2 71 -14.2 0 1 277.9,525.3M246.6,386.8A53.2 71 -14.2 0 1 315.6,442.6A53.2 71 -14.2 0 1 281.4,524.4M250.1,385.9A53.2 71 -14.2 0 1 319.1,441.7A53.2 71 -14.2 0 1 284.9,523.6M253.6,385A53.2 71 -14.2 0 1 322.6,440.8A53.2 71 -14.2 0 1 288.4,522.7M257.1,384.1A53.2 71 -14.2 0 1 326.1,439.9A53.2 71 -14.2 0 1 291.9,521.8M260.6,383.2A53.2 71 -14.2 0 1 329.6,439A53.2 71 -14.2 0 1 295.4,520.9M264.1,382.4A53.2 71 -14.2 0 1 333.1,438.1A53.2 71 -14.2 0 1 298.9,520M267.6,381.5A53.2 71 -14.2 0 1 336.6,437.3A53.2 71 -14.2 0 1 302.4,519.1M271.1,380.6A53.2 71 -14.2 0 1 340.1,436.4A53.2 71 -14.2 0 1 305.9,518.3M274.6,379.7A53.2 71 -14.2 0 1 343.6,435.5A53.2 71 -14.2 0 1 309.4,517.4M278.1,378.8A53.2 71 -14.2 0 1 347.1,434.6A53.2 71 -14.2 0 1 312.9,516.5M281.6,377.9A53.2 71 -14.2 0 1 350.6,433.7A53.2 71 -14.2 0 1 316.4,515.6M285.1,377A53.2 71 -14.2 0 1 354.1,432.8A53.2 71 -14.2 0 1 319.9,514.7M288.6,376.2A53.2 71 -14.2 0 1 357.6,431.9A53.2 71 -14.2 0 1 323.4,513.8M292.1,375.3A53.2 71 -14.2 0 1 361.1,431.1A53.2 71 -14.2 0 1 326.9,512.9M295.6,374.4A53.2 71 -14.2 0 1 364.6,430.2A53.2 71 -14.2 0 1 330.4,512.1M299.1,373.5A53.2 71 -14.2 0 1 368.1,429.3A53.2 71 -14.2 0 1 333.9,511.2M302.6,372.6A53.2 71 -14.2 0 1 371.6,428.4A53.2 71 -14.2 0 1 337.4,510.3M306.1,371.7A53.2 71 -14.2 0 1 375.1,427.5A53.2 71 -14.2 0 1 340.9,509.4M309.6,370.9A53.2 71 -14.2 0 1 378.6,426.6A53.2 71 -14.2 0 1 344.4,508.5M313.1,370A53.2 71 -14.2 0 1 382.1,425.8A53.2 71 -14.2 0 1 347.9,507.6M316.6,369.1A53.2 71 -14.2 0 1 385.6,424.9A53.2 71 -14.2 0 1 351.4,506.8M320.1,368.2A53.2 71 -14.2 0 1 389.1,424A53.2 71 -14.2 0 1 354.9,505.9M323.6,367.3A53.2 71 -14.2 0 1 392.6,423.1A53.2 71 -14.2 0 1 358.4,505M327.1,366.4A53.2 71 -14.2 0 1 396.1,422.2A53.2 71 -14.2 0 1 361.9,504.1M330.6,365.5A53.2 71 -14.2 0 1 399.6,421.3A53.2 71 -14.2 0 1 365.4,503.2M334.1,364.7A53.2 71 -14.2 0 1 403.1,420.4A53.2 71 -14.2 0 1 368.9,502.3M337.6,363.8A53.2 71 -14.2 0 1 406.6,419.6A53.2 71 -14.2 0 1 372.4,501.4M341.1,362.9A53.2 71 -14.2 0 1 410.1,418.7A53.2 71 -14.2 0 1 375.9,500.6M344.6,362A53.2 71 -14.2 0 1 413.6,417.8A53.2 71 -14.2 0 1 379.4,499.7M348.1,361.1A53.2 71 -14.2 0 1 417.1,416.9A53.2 71 -14.2 0 1 382.9,498.8M351.6,360.2A53.2 71 -14.2 0 1 420.6,416A53.2 71 -14.2 0 1 386.4,497.9M355.1,359.4A53.2 71 -14.2 0 1 424.1,415.1A53.2 71 -14.2 0 1 389.9,497M358.6,358.5A53.2 71 -14.2 0 1 427.6,414.3A53.2 71 -14.2 0 1 393.4,496.1M362.1,357.6A53.2 71 -14.2 0 1 431.1,413.4A53.2 71 -14.2 0 1 396.9,495.3M365.6,356.7A53.2 71 -14.2 0 1 434.6,412.5A53.2 71 -14.2 0 1 400.4,494.4M369.1,355.8A53.2 71 -14.2 0 1 438.1,411.6A53.2 71 -14.2 0 1 403.9,493.5M372.6,354.9A53.2 71 -14.2 0 1 441.6,410.7A53.2 71 -14.2 0 1 407.4,492.6M376.1,354A53.2 71 -14.2 0 1 445.1,409.8A53.2 71 -14.2 0 1 410.9,491.7" stroke-width="1.5"/>
</g>
<path d="M288.6,376.2A53.2 71 -14.2 0 1 357.6,431.9A53.2 71 -14.2 0 1 323.4,513.8" fill="none" stroke="#000" stroke-width="1.8" opacity=".5"/>
<path d="M102.6,423.2L377.2,353.8M137.4,560.8L412,491.4" fill="none" stroke="#000" stroke-width="2"/>
<ellipse rx="53.2" ry="71" transform="translate(120 492) rotate(-14.2)" fill="url(#gCap)"/>
<g clip-path="url(#cCap)"><path d="M173.2,516.1L173.2,486.8M131.5,561.9L108.5,557.8M169.9,528.7L169.9,472.9M141.9,559.4L98.1,551.7M166.5,536.4L166.5,464.1M148.4,556.2L91.6,546.2M163.1,542L163.1,457.2M153.3,552.8L86.7,541M159.7,546.5L159.7,451.6M157.3,549.2L82.7,536M156.4,550.1L156.4,446.8M160.6,545.5L79.4,531.2M153,553.1L153,442.6M163.3,541.7L76.7,526.4M149.6,555.5L149.6,439M165.7,537.8L74.3,521.7M146.2,557.5L146.2,435.8M167.7,533.9L72.3,517M142.9,559L142.9,433.1M169.4,529.9L70.6,512.4M139.5,560.2L139.5,430.6M170.9,525.8L69.1,507.8M136.1,561.1L136.1,428.6M172,521.7L68,503.3M132.7,561.7L132.7,426.8M173,517.6L67,498.9M129.4,562L129.4,425.3M173.7,513.4L66.3,494.4M126,562L126,424.1M174.1,509.2L65.9,490.1M122.6,561.8L122.6,423.1M174.4,504.9L65.6,485.7M119.2,561.3L119.2,422.5M174.5,500.6L65.5,481.4M115.9,560.5L115.9,422.1M174.3,496.3L65.7,477.1M112.5,559.4L112.5,421.9M173.9,492L66.1,472.9M109.1,558.1L109.1,422.1M173.4,487.6L66.6,468.7M105.7,556.5L105.7,422.5M172.6,483.1L67.4,464.5M102.4,554.5L102.4,423.2M171.5,478.6L68.5,460.4M99,552.3L99,424.3M170.2,474.1L69.8,456.3M95.6,549.7L95.6,425.6M168.7,469.5L71.3,452.3M92.2,546.8L92.2,427.4M166.9,464.9L73.1,448.3M88.9,543.4L88.9,429.6M164.7,460.2L75.3,444.4M85.5,539.6L85.5,432.2M162.1,455.5L77.9,440.6M82.1,535.1L82.1,435.5M159.1,450.6L80.9,436.8M78.7,530L78.7,439.4M155.5,445.7L84.5,433.1M75.4,523.9L75.4,444.4M151.2,440.6L88.8,429.6M72,516.3L72,450.8M145.7,435.4L94.3,426.3M68.6,505.9L68.6,460M138,429.7L102,423.3" fill="none" stroke="#000" stroke-width="1.1"/></g>
<ellipse rx="53.2" ry="71" transform="translate(120 492) rotate(-14.2)" fill="none" stroke="#000" stroke-width="1.5"/></g></svg>
<div class="abs" id="topline"></div>
<div class="abs" id="leftline"></div>

<div class="abs" id="panel">
  <div class="abs" id="ttl">Filters</div>
  <div class="abs" id="ok"><svg width="40" height="40" viewBox="0 0 40 40"><path d="M13.5 21 L18 25.5 L27.5 15.5" fill="none" stroke="#fff" stroke-width="1.8"/></svg></div>
  <div class="abs" id="cancel"><svg width="38" height="38" viewBox="0 0 38 38"><path d="M14.5 14.5 L23.5 23.5 M23.5 14.5 L14.5 23.5" fill="none" stroke="#555" stroke-width="1.3"/></svg></div>
  <div class="abs" id="band"></div>
  <svg class="abs" style="left:21px;top:76.3px" width="10" height="8" viewBox="0 0 10 8"><path d="M1.5 2.2 L5 5.7 L8.5 2.2" fill="none" stroke="#444" stroke-width="1.2"/></svg>
  <svg class="abs" style="left:33px;top:70px" width="20" height="20" viewBox="0 0 20 20">
    <path d="M7.5 2.5 L14.5 9.5 L8.5 15.5 L1.5 8.5 Z" fill="none" stroke="#0073a5" stroke-width="1.4" stroke-linejoin="round"/>
    <path d="M2.2 9.2 L13.8 9.2 L8.5 14.8 Z" fill="#0073a5"/>
    <path d="M4.5 2 L9 6.5" stroke="#0073a5" stroke-width="1.3" fill="none"/>
    <path d="M16.3 11.5 C17.6 13.4 18.2 14.3 18.2 15.2 a1.9 1.9 0 0 1 -3.8 0 C14.4 14.3 15 13.4 16.3 11.5Z" fill="#0073a5"/>
  </svg>
  <div class="abs" id="pc">Parts Color</div>
  <div class="abs" id="tog"></div>
  <div class="abs" id="knob"></div>
  <div class="abs lbl" style="left:14.5px;top:128.5px">Coloring</div>
  <div class="abs" id="sel"><div class="abs" id="selt">Solid Color</div>
    <svg class="abs" style="left:101px;top:13.5px" width="14" height="10" viewBox="0 0 14 10"><path d="M2 2.5 L7 7.5 L12 2.5" fill="none" stroke="#555" stroke-width="1.2"/></svg>
  </div>
  <div class="abs" id="sw"></div>
  <div class="abs lbl" style="left:14.5px;top:173.5px;letter-spacing:.62px">Opacity</div>
  <div class="abs" id="trk"></div>
  <div class="abs" id="thumb"></div>
</div>

<!-- toolbar -->
<svg class="abs" style="left:734px;top:26px" width="36" height="36" viewBox="0 0 36 36">
  <g fill="none" stroke="#333" stroke-width="1">
  <path d="M14.5 4 L23 8.8 L23 18.8 L14.5 23.8 L6 18.8 L6 8.8 Z M6 8.8 L14.5 13.8 L23 8.8 M14.5 13.8 L14.5 23.8"/>
  <path d="M14.5 4 L14.5 1.5 M6 18.8 L3.8 20.3 M23 18.8 L25.2 20.3" stroke-width=".9"/>
  </g>
  <path d="M26.5 31 L31 31 L31 26.5" fill="none" stroke="#888" stroke-width="1.1"/>
</svg>
<div class="abs tb" id="b2">
  <svg class="abs" style="left:0;top:0" width="48" height="48" viewBox="0 0 48 48">
    <g stroke="#777" stroke-width=".6" stroke-linejoin="round">
    <path d="M24 13.5 L32.5 18.2 L24 23 L15.5 18.2Z" fill="#dedede"/>
    <path d="M15.5 18.2 L24 23 L24 33.5 L15.5 28.6Z" fill="#8f8f8f"/>
    <path d="M24 23 L32.5 18.2 L32.5 28.6 L24 33.5Z" fill="#c4c4c4"/>
    <path d="M19.7 15.8 L28.2 20.6 L28.2 31 M28.2 15.8 L19.7 20.6 L19.7 31 M15.5 23.4 L24 28.2 L32.5 23.4" fill="none" stroke="#666"/>
    </g>
    <path d="M36 40.3 L40.5 40.3 L40.5 35.8" fill="none" stroke="#888" stroke-width="1.1"/>
  </svg>
</div>
<svg class="abs" style="left:846px;top:28px" width="26" height="26" viewBox="0 0 26 26">
  <g stroke="#111" stroke-width="1.2" stroke-linejoin="round">
  <path d="M12.5 2.5 L21 7.3 L12.5 12.2 L4 7.3Z" fill="#f3d77a"/>
  <path d="M4 7.3 L12.5 12.2 L12.5 22.3 L4 17.5Z" fill="#e9a120"/>
  <path d="M12.5 12.2 L21 7.3 L21 17.5 L12.5 22.3Z" fill="#e9a120"/>
  </g>
  <g fill="#111"><circle cx="12.5" cy="2.5" r="1.7"/><circle cx="21" cy="7.3" r="1.7"/><circle cx="4" cy="7.3" r="1.7"/><circle cx="12.5" cy="12.2" r="1.7"/><circle cx="4" cy="17.5" r="1.7"/><circle cx="21" cy="17.5" r="1.7"/><circle cx="12.5" cy="22.3" r="1.7"/></g>
</svg>
<div class="abs tb" id="b4">
  <svg class="abs" style="left:11px;top:12px" width="26" height="26" viewBox="0 0 26 26">
  <g stroke="#111" stroke-width="1.2" stroke-linejoin="round">
  <path d="M12.5 2.5 L21 7.3 L12.5 12.2 L4 7.3Z" fill="#fff"/>
  <path d="M4 7.3 L12.5 12.2 L12.5 22.3 L4 17.5Z" fill="#e9a120"/>
  <path d="M12.5 12.2 L21 7.3 L21 17.5 L12.5 22.3Z" fill="#fff"/>
  </g>
  <g fill="#111"><circle cx="12.5" cy="2.5" r="1.7"/><circle cx="21" cy="7.3" r="1.7"/><circle cx="4" cy="7.3" r="1.7"/><circle cx="12.5" cy="12.2" r="1.7"/><circle cx="4" cy="17.5" r="1.7"/><circle cx="21" cy="17.5" r="1.7"/><circle cx="12.5" cy="22.3" r="1.7"/></g>
  </svg>
</div>

<div class="abs" id="dd">
  <div class="abs sep" style="top:48px"></div>
  <div class="abs sep" style="top:97px"></div>
  <div class="abs sep" style="top:146px"></div>
  <div class="abs sep" style="top:195px"></div>
  <div class="abs" id="selit"></div>
  <svg class="abs" style="left:0;top:0" width="48" height="342" viewBox="0 0 48 342">
    <defs>
      <g id="cube"><path d="M0 -10.3 L8.6 -5.4 L0 -.5 L-8.6 -5.4Z" class="t"/><path d="M-8.6 -5.4 L0 -.5 L0 10.3 L-8.6 5.4Z" class="l"/><path d="M0 -.5 L8.6 -5.4 L8.6 5.4 L0 10.3Z" class="r"/></g>
    </defs>
    <g transform="translate(24 24.5) scale(.93)" stroke="#777" stroke-width=".7" stroke-linejoin="round">
      <path d="M0 -10.3 L8.6 -5.4 L0 -.5 L-8.6 -5.4Z" fill="#d9d9d9"/><path d="M-8.6 -5.4 L0 -.5 L0 10.3 L-8.6 5.4Z" fill="#8a8a8a"/><path d="M0 -.5 L8.6 -5.4 L8.6 5.4 L0 10.3Z" fill="#c9c9c9"/>
      <path d="M-5.7 -3.2 L-5.7 7 M-2.9 -1.8 L-2.9 8.6 M-8.6 -1.8 L0 3 M-8.6 1.8 L0 6.6" stroke="#666" stroke-width=".5" fill="none"/>
    </g>
    <g transform="translate(24 73.5) scale(.93)" stroke="#555" stroke-width=".8" stroke-linejoin="round">
      <path d="M0 -10.3 L8.6 -5.4 L0 -.5 L-8.6 -5.4Z" fill="#cfcfcf"/><path d="M-8.6 -5.4 L0 -.5 L0 10.3 L-8.6 5.4Z" fill="#7d7d7d"/><path d="M0 -.5 L8.6 -5.4 L8.6 5.4 L0 10.3Z" fill="#bdbdbd"/>
      <path d="M-5.7 -3.2 L-5.7 7 M-2.9 -1.8 L-2.9 8.6 M-8.6 -1.8 L0 3 M-8.6 1.8 L0 6.6" stroke="#555" stroke-width=".5" fill="none"/>
    </g>
    <g transform="translate(24 122.5) scale(.93)" stroke="#666" stroke-width="1" stroke-linejoin="round" fill="#fff">
      <path d="M0 -10.3 L8.6 -5.4 L8.6 5.4 L0 10.3 L-8.6 5.4 L-8.6 -5.4Z M-8.6 -5.4 L0 -.5 L8.6 -5.4 M0 -.5 L0 10.3"/>
    </g>
    <g transform="translate(24 171.5) scale(.93)" stroke="#ccc" stroke-width=".5" stroke-linejoin="round">
      <path d="M0 -10.3 L8.6 -5.4 L0 -.5 L-8.6 -5.4Z" fill="#ececec"/><path d="M-8.6 -5.4 L0 -.5 L0 10.3 L-8.6 5.4Z" fill="#d0d0d0"/><path d="M0 -.5 L8.6 -5.4 L8.6 5.4 L0 10.3Z" fill="#dcdcdc"/>
    </g>
    <g transform="translate(24 220.5) scale(.93)" stroke="#bbb" stroke-width=".5" stroke-linejoin="round">
      <path d="M0 -10.3 L8.6 -5.4 L0 -.5 L-8.6 -5.4Z" fill="#e2e2e2"/><path d="M-8.6 -5.4 L0 -.5 L0 10.3 L-8.6 5.4Z" fill="#b9b9b9"/><path d="M0 -.5 L8.6 -5.4 L8.6 5.4 L0 10.3Z" fill="#cfcfcf"/>
    </g>
    <g transform="translate(24 269.5) scale(.93)" stroke="#666" stroke-width=".7" stroke-linejoin="round">
      <path d="M0 -10.3 L8.6 -5.4 L0 -.5 L-8.6 -5.4Z" fill="#dcdcdc"/><path d="M-8.6 -5.4 L0 -.5 L0 10.3 L-8.6 5.4Z" fill="#8f8f8f"/><path d="M0 -.5 L8.6 -5.4 L8.6 5.4 L0 10.3Z" fill="#c4c4c4"/>
      <path d="M-4.3 -7.8 L4.3 -3 L4.3 7.8 M4.3 -7.8 L-4.3 -3 L-4.3 7.8 M-8.6 0 L0 4.9 L8.6 0" fill="none" stroke="#555" stroke-width=".6"/>
    </g>
    <g transform="translate(24 318.5) scale(.93)" stroke="#444" stroke-width=".8" stroke-linejoin="round" fill="none">
      <path d="M0 -10.3 L8.6 -5.4 L8.6 5.4 L0 10.3 L-8.6 5.4 L-8.6 -5.4Z M-8.6 -5.4 L0 -.5 L8.6 -5.4 M0 -.5 L0 10.3"/>
      <path d="M-4.3 -7.8 L4.3 -3 L4.3 7.8 M4.3 -7.8 L-4.3 -3 L-4.3 7.8 M-8.6 0 L0 4.9 L8.6 0 M0 -10.3 L0 -.5 M-8.6 5.4 L0 .5 L8.6 5.4" stroke-width=".5"/>
      <g fill="#444" stroke="none"><circle cx="0" cy="-10.3" r="1.1"/><circle cx="8.6" cy="-5.4" r="1.1"/><circle cx="-8.6" cy="-5.4" r="1.1"/><circle cx="8.6" cy="5.4" r="1.1"/><circle cx="-8.6" cy="5.4" r="1.1"/><circle cx="0" cy="10.3" r="1.1"/></g>
    </g>
  </svg>
</div>
<div class="abs" id="tipa"></div>
<div class="abs" id="tip"><div class="abs" id="tipt">Surfaces with mesh</div></div>
</body></html>
